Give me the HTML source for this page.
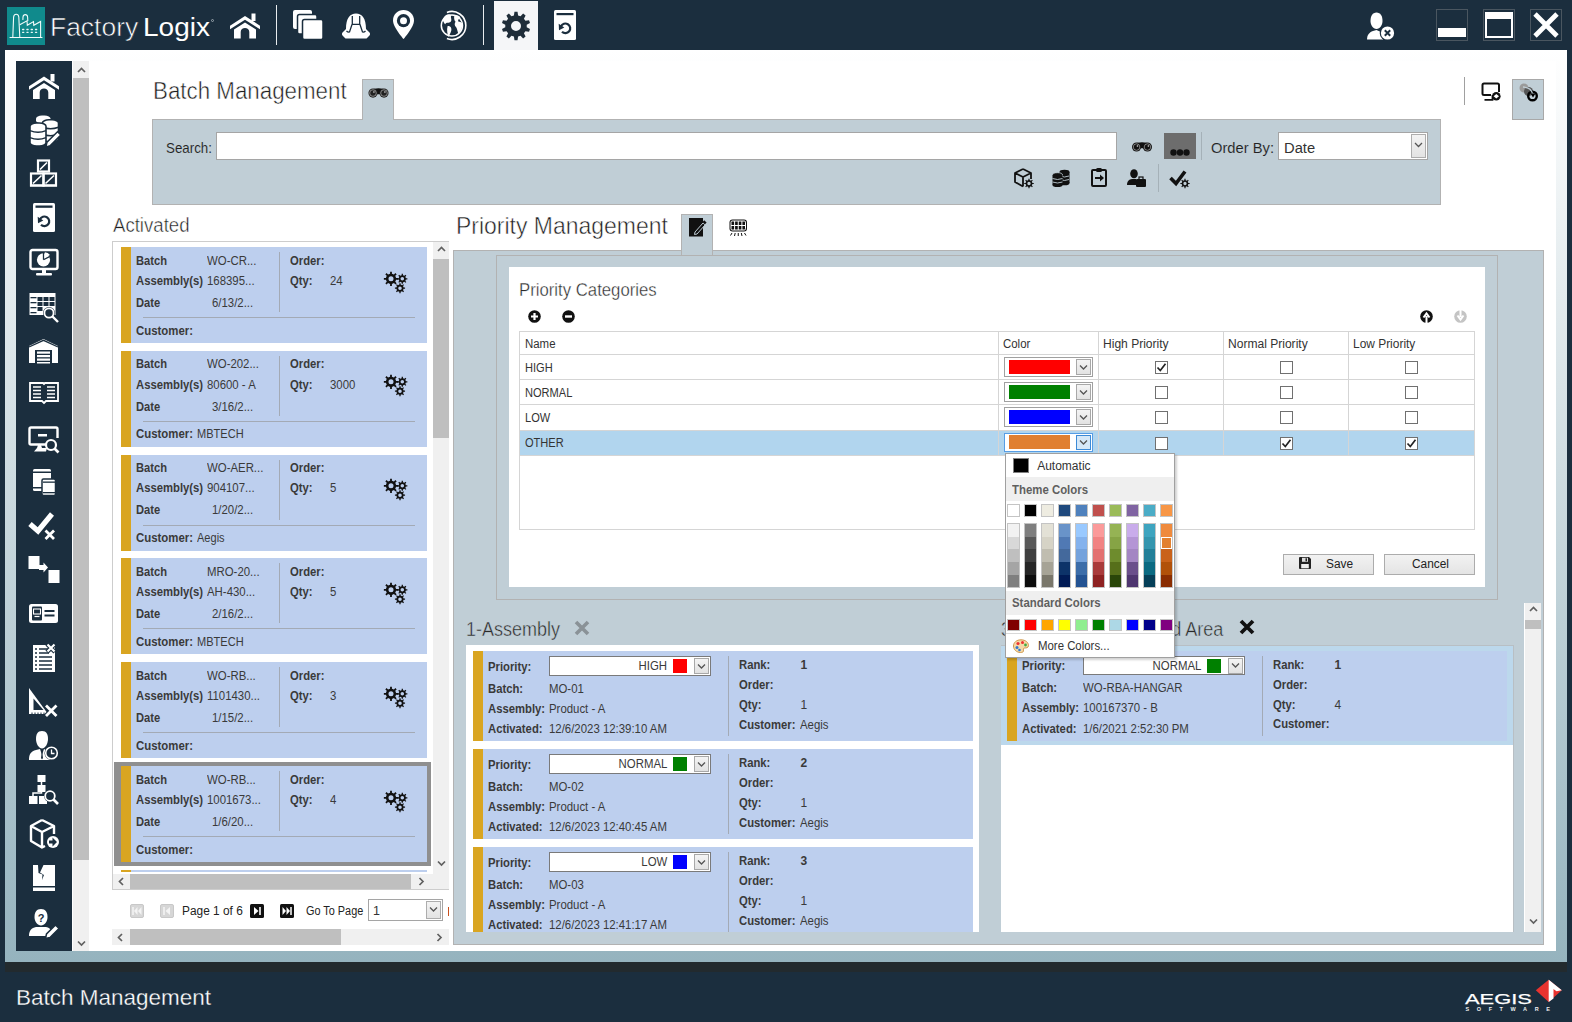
<!DOCTYPE html>
<html><head><meta charset="utf-8">
<style>
*{box-sizing:border-box}
html,body{margin:0;padding:0}
body{width:1572px;height:1022px;position:relative;overflow:hidden;background:#1b2e3e;font-family:"Liberation Sans",sans-serif;color:#333}
.a{position:absolute}
.t{position:absolute;white-space:nowrap;line-height:1}
svg{position:absolute;overflow:visible}
</style></head><body>
<div class="a" style="left:5px;top:50px;width:1562px;height:912px;background:linear-gradient(#ffffff,#95b3be)"></div>
<div class="a" style="left:16px;top:61px;width:1540px;height:890px;background:#fff"></div>
<div class="a" style="left:5px;top:962px;width:1562px;height:10px;background:#222a2e"></div>
<div class="a" style="left:7px;top:7px;width:38px;height:38px;background:#108a8c"></div>
<svg style="left:7px;top:7px;" width="38" height="38" viewBox="0 0 38 38"><g fill="none" stroke="#f2fbfb" stroke-width="1.1" stroke-linecap="round">
<path d="M3,30.5 H35"/>
<path d="M5.8,30.5 L6.6,10 Q7,7.3 9.2,7.3 Q11.4,7.3 11.8,10 L12.8,30.5"/>
<path d="M15.9,12.5 L16,10 Q16.3,7.6 18.3,7.6 Q20.3,7.6 20.6,10 L20.8,13.5"/>
<path d="M13.2,17.6 L20,13.8 L20.3,18.3 L26.5,14.6 L26.8,18.3 L33.6,14.4 V30.5"/>
</g><g stroke="#e8f6f6" stroke-width="1.3" stroke-linecap="round">
<path d="M15.6,22.5 h1.2 M19.9,22.5 h1.2 M24.2,22.5 h1.2 M28.5,22.5 h1.2 M15.6,25.3 h1.2 M19.9,25.3 h1.2 M24.2,25.3 h1.2 M28.5,25.3 h1.2"/></g></svg>
<div class="t" style="left:50.4px;top:15.46px;font-size:25.8px;font-weight:400;color:#ffffff;transform:scaleX(1.025);transform-origin:left top;-webkit-text-stroke:0.6px #1b2e3e;">Factory</div>
<div class="t" style="left:143.4px;top:15.46px;font-size:25.8px;font-weight:400;color:#ffffff;transform:scaleX(1.085);transform-origin:left top;">Logix</div>
<div class="a" style="left:210.5px;top:18.5px;width:3.2px;height:3.2px;border-radius:50%;border:0.8px solid #9aa5ad"></div>
<svg style="left:230px;top:13px;" width="30" height="26" viewBox="0 0 30 25"><path d="M0,12.2 L15,2.5 L30,12.2 L30,15.8 L15,6.2 L0,15.8 Z" fill="#ffffff"/>
<rect x="21.5" y="0" width="4" height="7.5" fill="#ffffff"/>
<path d="M4,16 L15,9 L26,16 L26,25 L19.3,25 L19.3,18.5 C19.3,16 17.3,14.5 15,14.5 C12.7,14.5 10.7,16 10.7,18.5 L10.7,25 L4,25 Z" fill="#ffffff"/></svg>
<div class="a" style="left:276px;top:5px;width:1px;height:40px;background:#e8ecee"></div>
<div class="a" style="left:483px;top:5px;width:1px;height:40px;background:#e8ecee"></div>
<svg style="left:293px;top:10px;" width="31" height="30" viewBox="0 0 31 30"><rect x="0" y="0" width="19" height="19" rx="2" fill="#ffffff"/>
<rect x="4.5" y="4.5" width="19.5" height="19.5" rx="2" fill="#ffffff" stroke="#1b2e3e" stroke-width="1.5"/>
<rect x="9.5" y="9.5" width="20.5" height="20" rx="2" fill="#ffffff" stroke="#1b2e3e" stroke-width="1.5"/></svg>
<svg style="left:341px;top:13px;" width="30" height="26" viewBox="0 0 30 26"><path d="M5,16 C5,5 9,0.5 15,0.5 C21,0.5 25,5 25,16 L27.5,18.5 Q30,20.5 28.5,22.5 L25.5,25.5 L4.5,25.5 L1.5,22.5 Q0,20.5 2.5,18.5 Z" fill="#ffffff"/>
<path d="M11.3,3 V11.3 H18.7 V3" fill="none" stroke="#1b2e3e" stroke-width="1.3"/>
<path d="M11,11.5 L8.5,19 Q7,19.5 5.5,18 M19,11.5 L21.5,19 Q23,19.5 24.5,18" fill="none" stroke="#1b2e3e" stroke-width="1.3"/></svg>
<svg style="left:393px;top:10px;" width="21" height="29" viewBox="0 0 21 29"><path d="M10.5,0 C16.3,0 21,4.6 21,10.4 C21,17 10.5,29 10.5,29 C10.5,29 0,17 0,10.4 C0,4.6 4.7,0 10.5,0 Z" fill="#ffffff"/>
<circle cx="10.5" cy="10.7" r="6.6" fill="#1b2e3e"/><circle cx="10.5" cy="10.7" r="3.5" fill="#ffffff"/></svg>
<svg style="left:440px;top:10px;" width="27" height="31" viewBox="0 0 27 31"><circle cx="11.9" cy="15.5" r="10.6" fill="#1b2e3e" stroke="#ffffff" stroke-width="1.5"/>
<path d="M4.5,9 C6,6 9,5 11,6.5 C10,8.5 12,10 10.5,12 C9,13.5 7,12 6,14 C5,12.5 3.5,11 4.5,9 Z M8,15.5 C10,15 11.5,17 11,19 C10.5,21 9.5,23 8.5,24.5 C8,22 7,19 8,15.5 Z M13.5,7 C15.5,6 18,7 18.5,8.5 C17,9.5 16,11 17,12 C19,12 20.5,13 20,15.5 C19.5,18 18,20 17,22 C16,20 16,18 15,16.5 C13.5,15.5 13.5,13 14.5,12 C13.5,11 13,9 13.5,7 Z" fill="#ffffff" transform="translate(11.9,15.5) scale(1.22) translate(-11.5,-15)"/>
<path d="M6.9,2.4 A14,14 0 1 1 6.9,28.6" fill="none" stroke="#ffffff" stroke-width="1.6"/></svg>
<div class="a" style="left:494px;top:1px;width:44px;height:49px;background:#f5f6f8"></div>
<svg style="left:501px;top:11px;" width="30" height="30" viewBox="0 0 30 30"><path d="M17.09,25.60 L16.53,29.22 L13.47,29.22 L12.91,25.60 L10.46,24.80 L7.88,27.40 L5.41,25.60 L7.08,22.34 L5.57,20.26 L1.95,20.85 L1.01,17.94 L4.28,16.29 L4.28,13.71 L1.01,12.06 L1.95,9.15 L5.57,9.74 L7.08,7.66 L5.41,4.40 L7.88,2.60 L10.46,5.20 L12.91,4.40 L13.47,0.78 L16.53,0.78 L17.09,4.40 L19.54,5.20 L22.12,2.60 L24.59,4.40 L22.92,7.66 L24.43,9.74 L28.05,9.15 L28.99,12.06 L25.72,13.71 L25.72,16.29 L28.99,17.94 L28.05,20.85 L24.43,20.26 L22.92,22.34 L24.59,25.60 L22.12,27.40 L19.54,24.80 Z M20.0,15 A5.0,5.0 0 1 0 10.0,15 A5.0,5.0 0 1 0 20.0,15 Z" fill="#1f2d39" fill-rule="evenodd"/></svg>
<svg style="left:554px;top:10px;" width="22" height="30" viewBox="0 0 22 30"><rect x="0" y="0" width="22" height="30" rx="1.5" fill="#ffffff"/>
<rect x="2.5" y="3" width="17" height="2.2" fill="#1b2e3e"/>
<path d="M8,21.7 A4.8,4.8 0 1 0 7,16.4" fill="none" stroke="#1b2e3e" stroke-width="2.2"/>
<path d="M4.7,13.8 L10.3,17.4 L5,20.2 Z" fill="#1b2e3e"/></svg>
<svg style="left:1367px;top:12px;" width="28" height="29" viewBox="0 0 28 29"><path d="M7.5,0.5 C11.5,0.5 13.5,4 13.5,9 C13.5,13 11,17 7.5,17 C4,17 1.5,13 1.5,9 C1.5,4 3.5,0.5 7.5,0.5 Z" fill="#ffffff" transform="translate(2,0)"/>
<path d="M0,27.5 C0,23 2,20.5 6,19 L9.5,18 L16,21 L16,27.5 Z" fill="#ffffff"/>
<circle cx="20.5" cy="21" r="7.8" fill="#1b2e3e"/><circle cx="20.5" cy="21" r="6.6" fill="#ffffff"/>
<path d="M17.8,18.3 L23.2,23.7 M23.2,18.3 L17.8,23.7" stroke="#1b2e3e" stroke-width="2"/></svg>
<div class="a" style="left:1436px;top:9px;width:32px;height:32px;border:1px solid #4a5660"></div>
<div class="a" style="left:1483px;top:9px;width:32px;height:32px;border:1px solid #4a5660"></div>
<div class="a" style="left:1530px;top:9px;width:32px;height:32px;border:1px solid #4a5660"></div>
<div class="a" style="left:1438px;top:28px;width:28px;height:9px;background:#fff"></div>
<div class="a" style="left:1485px;top:12px;width:28px;height:26px;border:2px solid #fff;border-top-width:7px"></div>
<svg style="left:1533px;top:12px;" width="26" height="26" viewBox="0 0 26 26"><path d="M2,2 L24,24 M24,2 L2,24" stroke="#ffffff" stroke-width="4.8"/></svg>
<div class="a" style="left:16px;top:61px;width:56px;height:890px;background:#1b2e3e"></div>
<div class="a" style="left:73px;top:61px;width:16px;height:890px;background:#f0f0f0"></div>
<div class="a" style="left:73px;top:78px;width:16px;height:782px;background:#bfbfbf"></div>
<svg style="left:76.5px;top:66.5px;" width="9" height="9" viewBox="0 0 9 9"><path d="M1,5 L4.5,1.5 L8,5" fill="none" stroke="#606060" stroke-width="1.7"/></svg>
<svg style="left:76.5px;top:940px;" width="9" height="9" viewBox="0 0 9 9"><path d="M1,1.5 L4.5,5 L8,1.5" fill="none" stroke="#606060" stroke-width="1.7"/></svg>
<svg style="left:29px;top:73.5px;" width="30" height="25" viewBox="0 0 30 25"><path d="M0,12.2 L15,2.5 L30,12.2 L30,15.8 L15,6.2 L0,15.8 Z" fill="#ffffff"/>
<rect x="21.5" y="0" width="4" height="7.5" fill="#ffffff"/>
<path d="M4,16 L15,9 L26,16 L26,25 L19.3,25 L19.3,18.5 C19.3,16 17.3,14.5 15,14.5 C12.7,14.5 10.7,16 10.7,18.5 L10.7,25 L4,25 Z" fill="#ffffff"/></svg>
<svg style="left:28px;top:114.6px;" width="32" height="32" viewBox="0 0 32 32"><rect x="8" y="0.5" width="14.5" height="8" rx="6" ry="3" fill="#ffffff"/>
<rect x="14.5" y="4.8" width="16" height="22" rx="6.5" ry="3" fill="#ffffff" stroke="#1b2e3e" stroke-width="1.6"/>
<path d="M14.5,12.2 Q22.5,15.2 30.5,12.2 M14.5,19.2 Q22.5,22.2 30.5,19.2" stroke="#1b2e3e" stroke-width="1.5" fill="none"/>
<rect x="2" y="8" width="16" height="23" rx="6.5" ry="3.2" fill="#ffffff" stroke="#1b2e3e" stroke-width="1.6"/>
<path d="M2,15.6 Q10,18.8 18,15.6 M2,22.6 Q10,25.8 18,22.6" stroke="#1b2e3e" stroke-width="1.5" fill="none"/>
<path d="M18,31.8 L19,27.2 L29.5,16.8 L32.8,20 L22.3,30.6 Z" fill="#ffffff" stroke="#1b2e3e" stroke-width="1.4"/></svg>
<svg style="left:28px;top:158.4px;" width="32" height="30" viewBox="0 0 32 30"><g fill="none" stroke="#ffffff" stroke-width="2.2"><rect x="10" y="2.5" width="11" height="11"/><rect x="3" y="15.5" width="12.5" height="12"/><rect x="15.5" y="15.5" width="12.5" height="12"/>
</g><path d="M12,11.5 L19,4.5 M5,25.5 L13.5,17.5 M17.5,25.5 L26,17.5" stroke="#ffffff" stroke-width="1.6"/><rect x="2" y="26.5" width="27" height="2" fill="#ffffff"/></svg>
<svg style="left:28px;top:201.8px;" width="32" height="32" viewBox="0 0 32 32"><rect x="5" y="1" width="22" height="29" rx="1.5" fill="#ffffff"/><rect x="7.5" y="3.5" width="17" height="2.3" fill="#1b2e3e"/>
<path d="M13,22.7 A4.8,4.8 0 1 0 12,17.4" fill="none" stroke="#1b2e3e" stroke-width="2.2"/><path d="M9.7,14.8 L15.3,18.4 L10,21.2 Z" fill="#1b2e3e"/></svg>
<svg style="left:28px;top:247.5px;" width="32" height="29" viewBox="0 0 32 29"><rect x="2.5" y="2" width="27" height="19" rx="2" fill="none" stroke="#ffffff" stroke-width="2.4"/>
<circle cx="15.5" cy="11.8" r="6.6" fill="#ffffff"/><path d="M15.5,11.8 L15.5,5 M15.5,11.8 L21.5,8.6" stroke="#1b2e3e" stroke-width="1.3"/><path d="M16.8,9.8 L16.8,4.2 A6.6,6.6 0 0 1 22,7.1 Z" fill="#ffffff"/>
<rect x="14" y="21" width="4" height="4" fill="#ffffff"/><rect x="8" y="25" width="16" height="2.6" rx="1" fill="#ffffff"/></svg>
<svg style="left:28px;top:292.3px;" width="32" height="31" viewBox="0 0 32 31"><rect x="1.5" y="1" width="26" height="22" fill="#ffffff"/>
<g fill="#1b2e3e"><rect x="9.5" y="5" width="5" height="4"/><rect x="15.5" y="5" width="5" height="4"/><rect x="21.5" y="5" width="5" height="4"/><rect x="9.5" y="10" width="5" height="4"/><rect x="15.5" y="10" width="5" height="4"/><rect x="21.5" y="10" width="5" height="4"/><rect x="9.5" y="15" width="5" height="4"/><rect x="2.5" y="5" width="6" height="1.3"/><rect x="2.5" y="10" width="6" height="1.3"/><rect x="2.5" y="15" width="6" height="1.3"/><rect x="2.5" y="20" width="6" height="1.3"/></g>
<circle cx="21" cy="21" r="6" fill="#1b2e3e"/><circle cx="21" cy="21" r="4.6" fill="none" stroke="#ffffff" stroke-width="1.8"/><path d="M24.5,24.5 L30,30" stroke="#ffffff" stroke-width="2.4"/></svg>
<svg style="left:28px;top:336.5px;" width="32" height="27" viewBox="0 0 32 27"><path d="M1,9 L15.5,2 L30,9 L30,26 L24,26 L24,13 L7,13 L7,26 L1,26 Z" fill="#ffffff"/>
<path d="M1,10 L15.5,3.3 L30,10" fill="none" stroke="#1b2e3e" stroke-width="1.3"/>
<g fill="#ffffff"><rect x="9" y="14.5" width="13" height="2.2"/><rect x="9" y="18" width="13" height="2.2"/><rect x="9" y="21.5" width="13" height="2.2"/><rect x="9" y="25" width="13" height="1.5"/></g></svg>
<svg style="left:28px;top:381.8px;" width="32" height="22" viewBox="0 0 32 22"><path d="M2,1 L15,1 L16,2 L17,1 L30,1 L30,19 L18,19 L16,21 L14,19 L2,19 Z" fill="none" stroke="#ffffff" stroke-width="1.8"/>
<g stroke="#ffffff" stroke-width="1.5"><path d="M5,5 H13 M5,8.5 H13 M5,12 H13 M5,15.5 H13 M19,5 H27 M19,8.5 H27 M19,12 H27 M19,15.5 H27"/></g></svg>
<svg style="left:28px;top:425.7px;" width="32" height="28" viewBox="0 0 32 28"><path d="M19,18.5 L3,18.5 Q1.5,18.5 1.5,17 L1.5,3 Q1.5,1.5 3,1.5 L28,1.5 Q29.5,1.5 29.5,3 L29.5,12" fill="none" stroke="#ffffff" stroke-width="2.4"/>
<rect x="10" y="8" width="9" height="2.5" fill="#ffffff"/><path d="M6,25.5 L18,25.5 L19,22 L14,22 L13,19 L10,19 L9,22 Z" fill="#ffffff"/>
<circle cx="23" cy="19" r="5" fill="none" stroke="#ffffff" stroke-width="2.2"/><path d="M26.5,22.5 L30.5,26.5" stroke="#ffffff" stroke-width="2.6"/></svg>
<svg style="left:28px;top:468.4px;" width="32" height="28" viewBox="0 0 32 28"><rect x="5" y="1" width="18" height="22" rx="1.5" fill="#ffffff"/><rect x="5" y="3.5" width="18" height="1.5" fill="#1b2e3e"/><rect x="5" y="19" width="18" height="1.5" fill="#1b2e3e"/>
<rect x="14" y="11" width="13.5" height="16.5" rx="1.5" fill="#ffffff" stroke="#1b2e3e" stroke-width="1.5"/><rect x="15" y="13.5" width="12" height="1.3" fill="#1b2e3e"/><rect x="15" y="24" width="12" height="1.3" fill="#1b2e3e"/></svg>
<svg style="left:28px;top:510.9px;" width="32" height="29" viewBox="0 0 32 29"><path d="M2,13 L10,20 L24,3" fill="none" stroke="#ffffff" stroke-width="5.2"/><path d="M17.5,19.5 L26,28 M26,19.5 L17.5,28" stroke="#ffffff" stroke-width="2.8"/></svg>
<svg style="left:28px;top:555.3px;" width="32" height="29" viewBox="0 0 32 29"><rect x="0.5" y="1" width="11" height="13" fill="#ffffff"/><rect x="20.5" y="15" width="11" height="13" fill="#ffffff"/>
<path d="M11,10 L15.5,10 L15.5,7.5 L20,12.5 L15.5,17.5 L15.5,15 L11,15 Z" fill="#ffffff"/></svg>
<svg style="left:28px;top:603.3px;" width="32" height="21" viewBox="0 0 32 21"><rect x="1" y="1" width="29" height="19" rx="2.5" fill="#ffffff"/><rect x="4" y="3.5" width="10" height="14" rx="1" fill="#1b2e3e"/>
<rect x="5.5" y="6" width="7" height="5" fill="none" stroke="#ffffff" stroke-width="1.1"/><path d="M6.5,13.5 H11.5" stroke="#ffffff" stroke-width="1.2"/>
<path d="M16.5,8 H26.5 M16.5,12.5 H26.5" stroke="#1b2e3e" stroke-width="1.8"/></svg>
<svg style="left:28px;top:643.0px;" width="32" height="30" viewBox="0 0 32 30"><rect x="5" y="2" width="22" height="27" fill="#ffffff"/>
<g stroke="#1b2e3e" stroke-width="1.4"><path d="M7,6 H9 M11,6 H21 M7,10 H9 M11,10 H21 M7,14 H9 M11,14 H24 M7,18 H9 M11,18 H24 M7,22 H9 M11,22 H24 M7,26 H9 M11,26 H24"/></g>
<path d="M19,1 L27,9 M27,1 L19,9" stroke="#1b2e3e" stroke-width="4.5"/><path d="M19.5,1.5 L26.5,8.5 M26.5,1.5 L19.5,8.5" stroke="#ffffff" stroke-width="2.2"/></svg>
<svg style="left:28px;top:686.8px;" width="32" height="31" viewBox="0 0 32 31"><path d="M1,1 L1,27 L20,27 Z" fill="#ffffff"/><path d="M5.5,11.5 L5.5,23 L15.5,23 Z" fill="#1b2e3e"/>
<g stroke="#1b2e3e" stroke-width="1"><path d="M4,27 V25.5 M7,27 V25.5 M10,27 V25.5 M13,27 V25.5 M16,27 V25.5"/></g>
<path d="M17.5,18 L29,29.5 M29,18 L17.5,29.5" stroke="#1b2e3e" stroke-width="5"/><path d="M18,18.5 L28.5,29 M28.5,18.5 L18,29" stroke="#ffffff" stroke-width="2.8"/></svg>
<svg style="left:28px;top:730.3px;" width="32" height="31" viewBox="0 0 32 31"><path d="M14,1 C18.5,1 20,4.5 20,9 C20,14 17,18.5 14,18.5 C11,18.5 8,14 8,9 C8,4.5 9.5,1 14,1 Z" fill="#ffffff"/>
<path d="M1,30 C1,24 3,21.5 8,20 L12,19 L14,25 L16,19 L20,21 L22,30 Z" fill="#ffffff"/><path d="M14,20 L13,28 L14,29.5 L15,28 Z" fill="#1b2e3e"/>
<circle cx="23.5" cy="23" r="7" fill="#1b2e3e"/><circle cx="23.5" cy="23" r="5.8" fill="none" stroke="#ffffff" stroke-width="1.6"/><path d="M23.5,19.5 V23.5 H26.5" fill="none" stroke="#ffffff" stroke-width="1.3"/></svg>
<svg style="left:28px;top:774.0px;" width="32" height="32" viewBox="0 0 32 32"><rect x="9.5" y="1" width="8" height="7" fill="#ffffff"/><rect x="9.5" y="11" width="8" height="7" fill="#ffffff"/><path d="M13.5,8 V11" stroke="#ffffff" stroke-width="1.5"/>
<path d="M5,22 V19 H13.5 V18" fill="none" stroke="#ffffff" stroke-width="1.5"/><rect x="1" y="22" width="8.5" height="8" fill="#ffffff"/><rect x="11" y="22" width="8" height="8" fill="#ffffff"/>
<circle cx="22" cy="22" r="6" fill="#1b2e3e"/><circle cx="22" cy="22" r="4.8" fill="none" stroke="#ffffff" stroke-width="1.8"/><path d="M25.5,25.5 L30,30" stroke="#ffffff" stroke-width="2.6"/></svg>
<svg style="left:29px;top:818.0px;" width="32" height="32" viewBox="0 0 32 32"><path d="M13,2 L25,8 L25,16 M13,2 L2,8 L2,23 L13,29.5 L16,28 M2,8 L13,14 L25,8 M13,14 L13,29.5" fill="none" stroke="#ffffff" stroke-width="2.4" stroke-linejoin="round"/>
<circle cx="24" cy="24" r="7.5" fill="#1b2e3e"/><circle cx="24" cy="24" r="6" fill="#ffffff"/><path d="M20,22.5 H23.5 V19.5 L28,24 L23.5,28.5 V25.5 H20 Z" fill="#1b2e3e"/></svg>
<svg style="left:28px;top:863.7px;" width="32" height="28" viewBox="0 0 32 28"><rect x="5" y="1" width="22" height="26" fill="#ffffff"/><path d="M10,1 L15.5,1 L12,8.5 L16,11 L14,16 L14.5,10.5 L10.5,9 Z" fill="#1b2e3e"/>
<rect x="5" y="22" width="22" height="1.5" fill="#1b2e3e"/></svg>
<svg style="left:28px;top:907.5px;" width="32" height="32" viewBox="0 0 32 32"><path d="M13,1 C17.5,1 19.5,4.5 19.5,9 C19.5,13.5 16.5,17.5 13,17.5 C9.5,17.5 6.5,13.5 6.5,9 C6.5,4.5 8.5,1 13,1 Z" fill="#ffffff"/>
<text x="13" y="13.5" font-family="Liberation Sans" font-weight="700" font-size="11" fill="#1b2e3e" text-anchor="middle">?</text>
<path d="M1,28 C1,22.5 3.5,20 8,19 L18,19 C21,19.5 22,21 23,22 L19,28 Z" fill="#ffffff"/>
<path d="M17.5,30.5 L18.5,26 L27.5,17 L31,20.5 L22,29.5 Z" fill="#ffffff" stroke="#1b2e3e" stroke-width="1.5"/></svg>
<div class="t" style="left:16px;top:986.95px;font-size:22.5px;font-weight:400;color:#ffffff;-webkit-text-stroke:0.3px #1b2e3e;">Batch Management</div>
<div class="t" style="left:1465px;top:990.88px;font-size:15.5px;font-weight:400;color:#ffffff;transform:scaleX(1.41);transform-origin:left top;-webkit-text-stroke:0.25px #fff;">AEGIS</div>
<div class="t" style="left:1465.5px;top:1006.84px;font-size:5.5px;font-weight:700;color:#f0f0f0;letter-spacing:7.6px;">SOFTWARE</div>
<svg style="left:1535px;top:979px;" width="28" height="24" viewBox="0 0 28 24"><path d="M0.8,11.2 L13.7,0.8 L26.8,11.2 L13.7,22.9 Z" fill="#e8332f"/><path d="M13.7,0.8 L26.8,11.2 L21.5,12.3 L18.5,10 L18.5,19.5 L13.7,22.9 Z" fill="#ffffff"/></svg>
<div class="t" style="left:153px;top:80.10px;font-size:23.5px;font-weight:400;color:#1e1e1e;transform:scaleX(0.95);transform-origin:left top;-webkit-text-stroke:0.5px #ffffff;">Batch Management</div>
<div class="a" style="left:362px;top:79px;width:32px;height:42px;background:#c0ced6;border:1px solid #b2b2b2;border-bottom:none"></div>
<svg style="left:367.5px;top:86.5px;" width="21" height="11" viewBox="0 0 22 12"><path d="M3,4 C5,0.5 17,0.5 19,4 L19,8 L3,8 Z" fill="#111"/><circle cx="5" cy="6.6" r="5" fill="#222"/><circle cx="17" cy="6.6" r="5" fill="#222"/><circle cx="5" cy="6.6" r="3.6" fill="none" stroke="#bbb" stroke-width="0.7"/><circle cx="17" cy="6.6" r="3.6" fill="none" stroke="#bbb" stroke-width="0.7"/><circle cx="6" cy="5.4" r="0.9" fill="#ddd"/><circle cx="18" cy="5.4" r="0.9" fill="#ddd"/></svg>
<div class="a" style="left:152px;top:119px;width:1289px;height:86px;background:#c0ced6;border:1px solid #b2b2b2"></div>
<div class="a" style="left:363px;top:119px;width:30px;height:2px;background:#c0ced6"></div>
<div class="t" style="left:165.8px;top:139.88px;font-size:15.5px;font-weight:400;color:#222;transform:scaleX(0.86);transform-origin:left top;-webkit-text-stroke:0.12px #c0ced6;">Search:</div>
<div class="a" style="left:216px;top:132px;width:901px;height:28px;background:#fff;border:1px solid #a5a5a5"></div>
<svg style="left:1132px;top:140.5px;" width="20" height="11" viewBox="0 0 22 12"><path d="M3,4 C5,0.5 17,0.5 19,4 L19,8 L3,8 Z" fill="#111"/><circle cx="5" cy="6.6" r="5" fill="#111"/><circle cx="17" cy="6.6" r="5" fill="#111"/><circle cx="5" cy="6.6" r="3.6" fill="none" stroke="#bbb" stroke-width="0.7"/><circle cx="17" cy="6.6" r="3.6" fill="none" stroke="#bbb" stroke-width="0.7"/><circle cx="6" cy="5.4" r="0.9" fill="#ddd"/><circle cx="18" cy="5.4" r="0.9" fill="#ddd"/></svg>
<div class="a" style="left:1164px;top:133px;width:32px;height:26px;background:#6d6d6d"></div>
<svg style="left:1164px;top:133px;" width="32" height="26" viewBox="0 0 32 26"><circle cx="9.5" cy="19.5" r="3.2" fill="#111"/><circle cx="16" cy="19.5" r="3.2" fill="#111"/><circle cx="22.5" cy="19.5" r="3.2" fill="#111"/></svg>
<div class="a" style="left:1201px;top:132px;width:1px;height:28px;background:#a5b1b8"></div>
<div class="t" style="left:1211px;top:140.38px;font-size:15.5px;font-weight:400;color:#222;transform:scaleX(0.95);transform-origin:left top;-webkit-text-stroke:0.12px #c0ced6;">Order By:</div>
<div class="a" style="left:1278px;top:132px;width:150px;height:28px;background:#fff;border:1px solid #a5a5a5"></div>
<div class="a" style="left:1411px;top:134px;width:15px;height:24px;background:linear-gradient(#f3f3f3,#e3e3e3);border:1px solid #adadad"></div>
<svg style="left:1414px;top:141px;" width="9" height="8" viewBox="0 0 9 8"><path d="M1,2 L4.5,5.5 L8,2" fill="none" stroke="#555" stroke-width="1.3"/></svg>
<div class="t" style="left:1284px;top:139.88px;font-size:15.5px;font-weight:400;color:#333;transform:scaleX(0.95);transform-origin:left top;">Date</div>
<svg style="left:1014px;top:168px;" width="20" height="20" viewBox="0 0 20 20"><path d="M9,1 L17,5 L17,11 M9,1 L1,5 L1,14 L9,18.5 M1,5 L9,9 L17,5 M9,9 L9,18.5" fill="none" stroke="#111" stroke-width="1.8" stroke-linejoin="round"/><path d="M18.40,14.89 L19.76,14.91 L19.76,16.09 L18.40,16.11 L17.84,17.48 L18.79,18.45 L17.95,19.29 L16.98,18.34 L15.61,18.90 L15.59,20.26 L14.41,20.26 L14.39,18.90 L13.02,18.34 L12.05,19.29 L11.21,18.45 L12.16,17.48 L11.60,16.11 L10.24,16.09 L10.24,14.91 L11.60,14.89 L12.16,13.52 L11.21,12.55 L12.05,11.71 L13.02,12.66 L14.39,12.10 L14.41,10.74 L15.59,10.74 L15.61,12.10 L16.98,12.66 L17.95,11.71 L18.79,12.55 L17.84,13.52 Z M16.68,15.5 A1.68,1.68 0 1 0 13.32,15.5 A1.68,1.68 0 1 0 16.68,15.5 Z" fill="#111" fill-rule="evenodd"/></svg>
<svg style="left:1052px;top:169px;" width="18" height="18" viewBox="0 0 18 18"><ellipse cx="12.5" cy="3" rx="5" ry="2.3" fill="#111"/><rect x="7.5" y="3" width="10" height="11" fill="#111"/><ellipse cx="12.5" cy="14" rx="5" ry="2.3" fill="#111"/><path d="M8,7 Q12.5,9 17,7 M8,10.5 Q12.5,12.5 17,10.5" stroke="#c0ced6" stroke-width="0.9" fill="none"/><ellipse cx="5.5" cy="6" rx="5" ry="2.3" fill="#111" stroke="#c0ced6" stroke-width="0.8"/><rect x="0.5" y="6" width="10" height="10" fill="#111"/><ellipse cx="5.5" cy="16" rx="5" ry="2.1" fill="#111"/><path d="M0.5,9.5 Q5.5,11.5 10.5,9.5 M0.5,13 Q5.5,15 10.5,13" stroke="#c0ced6" stroke-width="0.9" fill="none"/></svg>
<svg style="left:1091px;top:167px;" width="16" height="20" viewBox="0 0 16 20"><rect x="1" y="3" width="14" height="16" rx="1" fill="none" stroke="#111" stroke-width="2"/><rect x="5" y="1" width="6" height="4" rx="1.5" fill="#111"/><path d="M4,11 H10" stroke="#111" stroke-width="2"/><path d="M9,7.5 L13,11 L9,14.5 Z" fill="#111"/></svg>
<svg style="left:1127px;top:169px;" width="19" height="18" viewBox="0 0 19 18"><ellipse cx="7" cy="4.8" rx="3.8" ry="4.5" fill="#111"/><path d="M0,16 C0,12 2,10.5 5,10 L9,10 L10,16 Z" fill="#111"/><rect x="9" y="10" width="10" height="8" rx="1" fill="#111"/><rect x="12" y="8" width="4" height="3" fill="none" stroke="#111" stroke-width="1.2"/></svg>
<div class="a" style="left:1158px;top:164px;width:1px;height:28px;background:#a5b1b8"></div>
<svg style="left:1170px;top:170px;" width="20" height="18" viewBox="0 0 20 18"><path d="M0.5,8 L6,13.5 L15,1.5" fill="none" stroke="#111" stroke-width="3.6"/><path d="M18.33,12.91 L19.66,12.92 L19.66,14.08 L18.33,14.09 L17.78,15.43 L18.71,16.39 L17.89,17.21 L16.93,16.28 L15.59,16.83 L15.58,18.16 L14.42,18.16 L14.41,16.83 L13.07,16.28 L12.11,17.21 L11.29,16.39 L12.22,15.43 L11.67,14.09 L10.34,14.08 L10.34,12.92 L11.67,12.91 L12.22,11.57 L11.29,10.61 L12.11,9.79 L13.07,10.72 L14.41,10.17 L14.42,8.84 L15.58,8.84 L15.59,10.17 L16.93,10.72 L17.89,9.79 L18.71,10.61 L17.78,11.57 Z M16.645,13.5 A1.645,1.645 0 1 0 13.355,13.5 A1.645,1.645 0 1 0 16.645,13.5 Z" fill="#111" fill-rule="evenodd"/></svg>
<div class="a" style="left:1464px;top:77px;width:1px;height:28px;background:#a0a0a0"></div>
<svg style="left:1481px;top:82px;" width="21" height="19" viewBox="0 0 21 19"><path d="M10,13 L3,13 Q1.5,13 1.5,11.5 L1.5,3 Q1.5,1.5 3,1.5 L16.5,1.5 Q18,1.5 18,3 L18,10" fill="none" stroke="#111" stroke-width="2"/><path d="M3.5,17.8 L11.5,17.8 L11.5,13" fill="none" stroke="#111" stroke-width="1.8"/><circle cx="15.3" cy="14.3" r="4.3" fill="#111"/><path d="M12.6,14.3 L15.3,12 L18,14.3 L15.3,16.6 Z" fill="#fff"/></svg>
<div class="a" style="left:1512px;top:79px;width:32px;height:41px;background:#c0ced6;border:1px solid #a8a8a8"></div>
<svg style="left:1519px;top:83px;" width="19" height="18" viewBox="0 0 19 18"><circle cx="5" cy="5" r="4.5" fill="#9a9a9a"/><circle cx="9.5" cy="8.5" r="4.5" fill="#555"/><circle cx="13.5" cy="13" r="4.3" fill="none" stroke="#000" stroke-width="2.4"/><path d="M4,4 C9,4 13,7 14,12" fill="none" stroke="#c0ced6" stroke-width="1.3"/><path d="M11.5,10.5 L14,14.5 L16.5,10.5" fill="#000"/></svg>
<div class="t" style="left:113px;top:215.07px;font-size:20px;font-weight:400;color:#1e1e1e;transform:scaleX(0.93);transform-origin:left top;-webkit-text-stroke:0.45px #fff;">Activated</div>
<div class="a" style="left:112px;top:241px;width:337px;height:649px;background:#fff;border:1px solid #cdcdcd"></div>
<div class="a" style="left:113px;top:242px;width:320px;height:630px;overflow:hidden">
<div class="a" style="left:8px;top:5.0px;width:306px;height:96px;background:#bdcfee"></div>
<div class="a" style="left:8px;top:5.0px;width:10px;height:96px;background:#d9a521"></div>
<div class="t" style="left:23px;top:12.64px;font-size:12px;font-weight:700;color:#3a3a3a;transform:scaleX(0.93);transform-origin:left top;">Batch</div>
<div class="t" style="left:23px;top:32.84px;font-size:12px;font-weight:700;color:#3a3a3a;transform:scaleX(0.94);transform-origin:left top;">Assembly(s)</div>
<div class="t" style="left:23px;top:54.84px;font-size:12px;font-weight:700;color:#3a3a3a;transform:scaleX(0.93);transform-origin:left top;">Date</div>
<div class="t" style="left:23px;top:82.64px;font-size:12px;font-weight:700;color:#3a3a3a;transform:scaleX(0.95);transform-origin:left top;">Customer:</div>
<div class="t" style="left:94px;top:12.64px;font-size:12px;font-weight:400;color:#3a3a3a;transform:scaleX(0.95);transform-origin:left top;">WO-CR...</div>
<div class="t" style="left:94px;top:32.84px;font-size:12px;font-weight:400;color:#3a3a3a;transform:scaleX(0.95);transform-origin:left top;">168395...</div>
<div class="t" style="left:98.5px;top:54.84px;font-size:12px;font-weight:400;color:#3a3a3a;transform:scaleX(0.95);transform-origin:left top;">6/13/2...</div>
<div class="a" style="left:166px;top:10.0px;width:1px;height:60px;background:#a3aab5"></div>
<div class="a" style="left:30px;top:75.0px;width:272px;height:1px;background:#a3aab5"></div>
<div class="t" style="left:176.5px;top:12.64px;font-size:12px;font-weight:700;color:#3a3a3a;transform:scaleX(0.94);transform-origin:left top;">Order:</div>
<div class="t" style="left:176.5px;top:32.84px;font-size:12px;font-weight:700;color:#3a3a3a;transform:scaleX(0.94);transform-origin:left top;">Qty:</div>
<div class="t" style="left:216.5px;top:32.84px;font-size:12px;font-weight:400;color:#3a3a3a;transform:scaleX(0.95);transform-origin:left top;">24</div>
<svg style="left:271px;top:29.5px;" width="23" height="22" viewBox="0 0 23 22"><path d="M12.10,5.89 L14.14,5.91 L14.14,7.69 L12.10,7.71 L11.25,9.76 L12.68,11.22 L11.42,12.48 L9.96,11.05 L7.91,11.90 L7.89,13.94 L6.11,13.94 L6.09,11.90 L4.04,11.05 L2.58,12.48 L1.32,11.22 L2.75,9.76 L1.90,7.71 L-0.14,7.69 L-0.14,5.91 L1.90,5.89 L2.75,3.84 L1.32,2.38 L2.58,1.12 L4.04,2.55 L6.09,1.70 L6.11,-0.34 L7.89,-0.34 L7.91,1.70 L9.96,2.55 L11.42,1.12 L12.68,2.38 L11.25,3.84 Z M9.52,6.8 A2.52,2.52 0 1 0 4.48,6.8 A2.52,2.52 0 1 0 9.52,6.8 Z" fill="#111" fill-rule="evenodd"/><path d="M21.91,6.15 L23.36,6.17 L23.36,7.43 L21.91,7.45 L21.31,8.90 L22.32,9.93 L21.43,10.82 L20.40,9.81 L18.95,10.41 L18.93,11.86 L17.67,11.86 L17.65,10.41 L16.20,9.81 L15.17,10.82 L14.28,9.93 L15.29,8.90 L14.69,7.45 L13.24,7.43 L13.24,6.17 L14.69,6.15 L15.29,4.70 L14.28,3.67 L15.17,2.78 L16.20,3.79 L17.65,3.19 L17.67,1.74 L18.93,1.74 L18.95,3.19 L20.40,3.79 L21.43,2.78 L22.32,3.67 L21.31,4.70 Z M20.085,6.8 A1.7849999999999997,1.7849999999999997 0 1 0 16.515,6.8 A1.7849999999999997,1.7849999999999997 0 1 0 20.085,6.8 Z" fill="#111" fill-rule="evenodd"/><path d="M19.61,15.55 L21.06,15.57 L21.06,16.83 L19.61,16.85 L19.01,18.30 L20.02,19.33 L19.13,20.22 L18.10,19.21 L16.65,19.81 L16.63,21.26 L15.37,21.26 L15.35,19.81 L13.90,19.21 L12.87,20.22 L11.98,19.33 L12.99,18.30 L12.39,16.85 L10.94,16.83 L10.94,15.57 L12.39,15.55 L12.99,14.10 L11.98,13.07 L12.87,12.18 L13.90,13.19 L15.35,12.59 L15.37,11.14 L16.63,11.14 L16.65,12.59 L18.10,13.19 L19.13,12.18 L20.02,13.07 L19.01,14.10 Z M17.785,16.2 A1.7849999999999997,1.7849999999999997 0 1 0 14.215,16.2 A1.7849999999999997,1.7849999999999997 0 1 0 17.785,16.2 Z" fill="#111" fill-rule="evenodd"/></svg>
<div class="a" style="left:8px;top:108.80000000000001px;width:306px;height:96px;background:#bdcfee"></div>
<div class="a" style="left:8px;top:108.80000000000001px;width:10px;height:96px;background:#d9a521"></div>
<div class="t" style="left:23px;top:116.44px;font-size:12px;font-weight:700;color:#3a3a3a;transform:scaleX(0.93);transform-origin:left top;">Batch</div>
<div class="t" style="left:23px;top:136.64px;font-size:12px;font-weight:700;color:#3a3a3a;transform:scaleX(0.94);transform-origin:left top;">Assembly(s)</div>
<div class="t" style="left:23px;top:158.64px;font-size:12px;font-weight:700;color:#3a3a3a;transform:scaleX(0.93);transform-origin:left top;">Date</div>
<div class="t" style="left:23px;top:186.44px;font-size:12px;font-weight:700;color:#3a3a3a;transform:scaleX(0.95);transform-origin:left top;">Customer:</div>
<div class="t" style="left:94px;top:116.44px;font-size:12px;font-weight:400;color:#3a3a3a;transform:scaleX(0.95);transform-origin:left top;">WO-202...</div>
<div class="t" style="left:94px;top:136.64px;font-size:12px;font-weight:400;color:#3a3a3a;transform:scaleX(0.95);transform-origin:left top;">80600 - A</div>
<div class="t" style="left:98.5px;top:158.64px;font-size:12px;font-weight:400;color:#3a3a3a;transform:scaleX(0.95);transform-origin:left top;">3/16/2...</div>
<div class="t" style="left:84px;top:186.44px;font-size:12px;font-weight:400;color:#3a3a3a;transform:scaleX(0.92);transform-origin:left top;">MBTECH</div>
<div class="a" style="left:166px;top:113.80000000000001px;width:1px;height:60px;background:#a3aab5"></div>
<div class="a" style="left:30px;top:178.8px;width:272px;height:1px;background:#a3aab5"></div>
<div class="t" style="left:176.5px;top:116.44px;font-size:12px;font-weight:700;color:#3a3a3a;transform:scaleX(0.94);transform-origin:left top;">Order:</div>
<div class="t" style="left:176.5px;top:136.64px;font-size:12px;font-weight:700;color:#3a3a3a;transform:scaleX(0.94);transform-origin:left top;">Qty:</div>
<div class="t" style="left:216.5px;top:136.64px;font-size:12px;font-weight:400;color:#3a3a3a;transform:scaleX(0.95);transform-origin:left top;">3000</div>
<svg style="left:271px;top:133.3px;" width="23" height="22" viewBox="0 0 23 22"><path d="M12.10,5.89 L14.14,5.91 L14.14,7.69 L12.10,7.71 L11.25,9.76 L12.68,11.22 L11.42,12.48 L9.96,11.05 L7.91,11.90 L7.89,13.94 L6.11,13.94 L6.09,11.90 L4.04,11.05 L2.58,12.48 L1.32,11.22 L2.75,9.76 L1.90,7.71 L-0.14,7.69 L-0.14,5.91 L1.90,5.89 L2.75,3.84 L1.32,2.38 L2.58,1.12 L4.04,2.55 L6.09,1.70 L6.11,-0.34 L7.89,-0.34 L7.91,1.70 L9.96,2.55 L11.42,1.12 L12.68,2.38 L11.25,3.84 Z M9.52,6.8 A2.52,2.52 0 1 0 4.48,6.8 A2.52,2.52 0 1 0 9.52,6.8 Z" fill="#111" fill-rule="evenodd"/><path d="M21.91,6.15 L23.36,6.17 L23.36,7.43 L21.91,7.45 L21.31,8.90 L22.32,9.93 L21.43,10.82 L20.40,9.81 L18.95,10.41 L18.93,11.86 L17.67,11.86 L17.65,10.41 L16.20,9.81 L15.17,10.82 L14.28,9.93 L15.29,8.90 L14.69,7.45 L13.24,7.43 L13.24,6.17 L14.69,6.15 L15.29,4.70 L14.28,3.67 L15.17,2.78 L16.20,3.79 L17.65,3.19 L17.67,1.74 L18.93,1.74 L18.95,3.19 L20.40,3.79 L21.43,2.78 L22.32,3.67 L21.31,4.70 Z M20.085,6.8 A1.7849999999999997,1.7849999999999997 0 1 0 16.515,6.8 A1.7849999999999997,1.7849999999999997 0 1 0 20.085,6.8 Z" fill="#111" fill-rule="evenodd"/><path d="M19.61,15.55 L21.06,15.57 L21.06,16.83 L19.61,16.85 L19.01,18.30 L20.02,19.33 L19.13,20.22 L18.10,19.21 L16.65,19.81 L16.63,21.26 L15.37,21.26 L15.35,19.81 L13.90,19.21 L12.87,20.22 L11.98,19.33 L12.99,18.30 L12.39,16.85 L10.94,16.83 L10.94,15.57 L12.39,15.55 L12.99,14.10 L11.98,13.07 L12.87,12.18 L13.90,13.19 L15.35,12.59 L15.37,11.14 L16.63,11.14 L16.65,12.59 L18.10,13.19 L19.13,12.18 L20.02,13.07 L19.01,14.10 Z M17.785,16.2 A1.7849999999999997,1.7849999999999997 0 1 0 14.215,16.2 A1.7849999999999997,1.7849999999999997 0 1 0 17.785,16.2 Z" fill="#111" fill-rule="evenodd"/></svg>
<div class="a" style="left:8px;top:212.60000000000002px;width:306px;height:96px;background:#bdcfee"></div>
<div class="a" style="left:8px;top:212.60000000000002px;width:10px;height:96px;background:#d9a521"></div>
<div class="t" style="left:23px;top:220.24px;font-size:12px;font-weight:700;color:#3a3a3a;transform:scaleX(0.93);transform-origin:left top;">Batch</div>
<div class="t" style="left:23px;top:240.44px;font-size:12px;font-weight:700;color:#3a3a3a;transform:scaleX(0.94);transform-origin:left top;">Assembly(s)</div>
<div class="t" style="left:23px;top:262.44px;font-size:12px;font-weight:700;color:#3a3a3a;transform:scaleX(0.93);transform-origin:left top;">Date</div>
<div class="t" style="left:23px;top:290.24px;font-size:12px;font-weight:700;color:#3a3a3a;transform:scaleX(0.95);transform-origin:left top;">Customer:</div>
<div class="t" style="left:94px;top:220.24px;font-size:12px;font-weight:400;color:#3a3a3a;transform:scaleX(0.95);transform-origin:left top;">WO-AER...</div>
<div class="t" style="left:94px;top:240.44px;font-size:12px;font-weight:400;color:#3a3a3a;transform:scaleX(0.95);transform-origin:left top;">904107...</div>
<div class="t" style="left:98.5px;top:262.44px;font-size:12px;font-weight:400;color:#3a3a3a;transform:scaleX(0.95);transform-origin:left top;">1/20/2...</div>
<div class="t" style="left:84px;top:290.24px;font-size:12px;font-weight:400;color:#3a3a3a;transform:scaleX(0.92);transform-origin:left top;">Aegis</div>
<div class="a" style="left:166px;top:217.60000000000002px;width:1px;height:60px;background:#a3aab5"></div>
<div class="a" style="left:30px;top:282.6px;width:272px;height:1px;background:#a3aab5"></div>
<div class="t" style="left:176.5px;top:220.24px;font-size:12px;font-weight:700;color:#3a3a3a;transform:scaleX(0.94);transform-origin:left top;">Order:</div>
<div class="t" style="left:176.5px;top:240.44px;font-size:12px;font-weight:700;color:#3a3a3a;transform:scaleX(0.94);transform-origin:left top;">Qty:</div>
<div class="t" style="left:216.5px;top:240.44px;font-size:12px;font-weight:400;color:#3a3a3a;transform:scaleX(0.95);transform-origin:left top;">5</div>
<svg style="left:271px;top:237.10000000000002px;" width="23" height="22" viewBox="0 0 23 22"><path d="M12.10,5.89 L14.14,5.91 L14.14,7.69 L12.10,7.71 L11.25,9.76 L12.68,11.22 L11.42,12.48 L9.96,11.05 L7.91,11.90 L7.89,13.94 L6.11,13.94 L6.09,11.90 L4.04,11.05 L2.58,12.48 L1.32,11.22 L2.75,9.76 L1.90,7.71 L-0.14,7.69 L-0.14,5.91 L1.90,5.89 L2.75,3.84 L1.32,2.38 L2.58,1.12 L4.04,2.55 L6.09,1.70 L6.11,-0.34 L7.89,-0.34 L7.91,1.70 L9.96,2.55 L11.42,1.12 L12.68,2.38 L11.25,3.84 Z M9.52,6.8 A2.52,2.52 0 1 0 4.48,6.8 A2.52,2.52 0 1 0 9.52,6.8 Z" fill="#111" fill-rule="evenodd"/><path d="M21.91,6.15 L23.36,6.17 L23.36,7.43 L21.91,7.45 L21.31,8.90 L22.32,9.93 L21.43,10.82 L20.40,9.81 L18.95,10.41 L18.93,11.86 L17.67,11.86 L17.65,10.41 L16.20,9.81 L15.17,10.82 L14.28,9.93 L15.29,8.90 L14.69,7.45 L13.24,7.43 L13.24,6.17 L14.69,6.15 L15.29,4.70 L14.28,3.67 L15.17,2.78 L16.20,3.79 L17.65,3.19 L17.67,1.74 L18.93,1.74 L18.95,3.19 L20.40,3.79 L21.43,2.78 L22.32,3.67 L21.31,4.70 Z M20.085,6.8 A1.7849999999999997,1.7849999999999997 0 1 0 16.515,6.8 A1.7849999999999997,1.7849999999999997 0 1 0 20.085,6.8 Z" fill="#111" fill-rule="evenodd"/><path d="M19.61,15.55 L21.06,15.57 L21.06,16.83 L19.61,16.85 L19.01,18.30 L20.02,19.33 L19.13,20.22 L18.10,19.21 L16.65,19.81 L16.63,21.26 L15.37,21.26 L15.35,19.81 L13.90,19.21 L12.87,20.22 L11.98,19.33 L12.99,18.30 L12.39,16.85 L10.94,16.83 L10.94,15.57 L12.39,15.55 L12.99,14.10 L11.98,13.07 L12.87,12.18 L13.90,13.19 L15.35,12.59 L15.37,11.14 L16.63,11.14 L16.65,12.59 L18.10,13.19 L19.13,12.18 L20.02,13.07 L19.01,14.10 Z M17.785,16.2 A1.7849999999999997,1.7849999999999997 0 1 0 14.215,16.2 A1.7849999999999997,1.7849999999999997 0 1 0 17.785,16.2 Z" fill="#111" fill-rule="evenodd"/></svg>
<div class="a" style="left:8px;top:316.4px;width:306px;height:96px;background:#bdcfee"></div>
<div class="a" style="left:8px;top:316.4px;width:10px;height:96px;background:#d9a521"></div>
<div class="t" style="left:23px;top:324.04px;font-size:12px;font-weight:700;color:#3a3a3a;transform:scaleX(0.93);transform-origin:left top;">Batch</div>
<div class="t" style="left:23px;top:344.24px;font-size:12px;font-weight:700;color:#3a3a3a;transform:scaleX(0.94);transform-origin:left top;">Assembly(s)</div>
<div class="t" style="left:23px;top:366.24px;font-size:12px;font-weight:700;color:#3a3a3a;transform:scaleX(0.93);transform-origin:left top;">Date</div>
<div class="t" style="left:23px;top:394.04px;font-size:12px;font-weight:700;color:#3a3a3a;transform:scaleX(0.95);transform-origin:left top;">Customer:</div>
<div class="t" style="left:94px;top:324.04px;font-size:12px;font-weight:400;color:#3a3a3a;transform:scaleX(0.95);transform-origin:left top;">MRO-20...</div>
<div class="t" style="left:94px;top:344.24px;font-size:12px;font-weight:400;color:#3a3a3a;transform:scaleX(0.95);transform-origin:left top;">AH-430...</div>
<div class="t" style="left:98.5px;top:366.24px;font-size:12px;font-weight:400;color:#3a3a3a;transform:scaleX(0.95);transform-origin:left top;">2/16/2...</div>
<div class="t" style="left:84px;top:394.04px;font-size:12px;font-weight:400;color:#3a3a3a;transform:scaleX(0.92);transform-origin:left top;">MBTECH</div>
<div class="a" style="left:166px;top:321.4px;width:1px;height:60px;background:#a3aab5"></div>
<div class="a" style="left:30px;top:386.4px;width:272px;height:1px;background:#a3aab5"></div>
<div class="t" style="left:176.5px;top:324.04px;font-size:12px;font-weight:700;color:#3a3a3a;transform:scaleX(0.94);transform-origin:left top;">Order:</div>
<div class="t" style="left:176.5px;top:344.24px;font-size:12px;font-weight:700;color:#3a3a3a;transform:scaleX(0.94);transform-origin:left top;">Qty:</div>
<div class="t" style="left:216.5px;top:344.24px;font-size:12px;font-weight:400;color:#3a3a3a;transform:scaleX(0.95);transform-origin:left top;">5</div>
<svg style="left:271px;top:340.9px;" width="23" height="22" viewBox="0 0 23 22"><path d="M12.10,5.89 L14.14,5.91 L14.14,7.69 L12.10,7.71 L11.25,9.76 L12.68,11.22 L11.42,12.48 L9.96,11.05 L7.91,11.90 L7.89,13.94 L6.11,13.94 L6.09,11.90 L4.04,11.05 L2.58,12.48 L1.32,11.22 L2.75,9.76 L1.90,7.71 L-0.14,7.69 L-0.14,5.91 L1.90,5.89 L2.75,3.84 L1.32,2.38 L2.58,1.12 L4.04,2.55 L6.09,1.70 L6.11,-0.34 L7.89,-0.34 L7.91,1.70 L9.96,2.55 L11.42,1.12 L12.68,2.38 L11.25,3.84 Z M9.52,6.8 A2.52,2.52 0 1 0 4.48,6.8 A2.52,2.52 0 1 0 9.52,6.8 Z" fill="#111" fill-rule="evenodd"/><path d="M21.91,6.15 L23.36,6.17 L23.36,7.43 L21.91,7.45 L21.31,8.90 L22.32,9.93 L21.43,10.82 L20.40,9.81 L18.95,10.41 L18.93,11.86 L17.67,11.86 L17.65,10.41 L16.20,9.81 L15.17,10.82 L14.28,9.93 L15.29,8.90 L14.69,7.45 L13.24,7.43 L13.24,6.17 L14.69,6.15 L15.29,4.70 L14.28,3.67 L15.17,2.78 L16.20,3.79 L17.65,3.19 L17.67,1.74 L18.93,1.74 L18.95,3.19 L20.40,3.79 L21.43,2.78 L22.32,3.67 L21.31,4.70 Z M20.085,6.8 A1.7849999999999997,1.7849999999999997 0 1 0 16.515,6.8 A1.7849999999999997,1.7849999999999997 0 1 0 20.085,6.8 Z" fill="#111" fill-rule="evenodd"/><path d="M19.61,15.55 L21.06,15.57 L21.06,16.83 L19.61,16.85 L19.01,18.30 L20.02,19.33 L19.13,20.22 L18.10,19.21 L16.65,19.81 L16.63,21.26 L15.37,21.26 L15.35,19.81 L13.90,19.21 L12.87,20.22 L11.98,19.33 L12.99,18.30 L12.39,16.85 L10.94,16.83 L10.94,15.57 L12.39,15.55 L12.99,14.10 L11.98,13.07 L12.87,12.18 L13.90,13.19 L15.35,12.59 L15.37,11.14 L16.63,11.14 L16.65,12.59 L18.10,13.19 L19.13,12.18 L20.02,13.07 L19.01,14.10 Z M17.785,16.2 A1.7849999999999997,1.7849999999999997 0 1 0 14.215,16.2 A1.7849999999999997,1.7849999999999997 0 1 0 17.785,16.2 Z" fill="#111" fill-rule="evenodd"/></svg>
<div class="a" style="left:8px;top:420.20000000000005px;width:306px;height:96px;background:#bdcfee"></div>
<div class="a" style="left:8px;top:420.20000000000005px;width:10px;height:96px;background:#d9a521"></div>
<div class="t" style="left:23px;top:427.84px;font-size:12px;font-weight:700;color:#3a3a3a;transform:scaleX(0.93);transform-origin:left top;">Batch</div>
<div class="t" style="left:23px;top:448.04px;font-size:12px;font-weight:700;color:#3a3a3a;transform:scaleX(0.94);transform-origin:left top;">Assembly(s)</div>
<div class="t" style="left:23px;top:470.04px;font-size:12px;font-weight:700;color:#3a3a3a;transform:scaleX(0.93);transform-origin:left top;">Date</div>
<div class="t" style="left:23px;top:497.84px;font-size:12px;font-weight:700;color:#3a3a3a;transform:scaleX(0.95);transform-origin:left top;">Customer:</div>
<div class="t" style="left:94px;top:427.84px;font-size:12px;font-weight:400;color:#3a3a3a;transform:scaleX(0.95);transform-origin:left top;">WO-RB...</div>
<div class="t" style="left:94px;top:448.04px;font-size:12px;font-weight:400;color:#3a3a3a;transform:scaleX(0.95);transform-origin:left top;">1101430...</div>
<div class="t" style="left:98.5px;top:470.04px;font-size:12px;font-weight:400;color:#3a3a3a;transform:scaleX(0.95);transform-origin:left top;">1/15/2...</div>
<div class="a" style="left:166px;top:425.20000000000005px;width:1px;height:60px;background:#a3aab5"></div>
<div class="a" style="left:30px;top:490.20000000000005px;width:272px;height:1px;background:#a3aab5"></div>
<div class="t" style="left:176.5px;top:427.84px;font-size:12px;font-weight:700;color:#3a3a3a;transform:scaleX(0.94);transform-origin:left top;">Order:</div>
<div class="t" style="left:176.5px;top:448.04px;font-size:12px;font-weight:700;color:#3a3a3a;transform:scaleX(0.94);transform-origin:left top;">Qty:</div>
<div class="t" style="left:216.5px;top:448.04px;font-size:12px;font-weight:400;color:#3a3a3a;transform:scaleX(0.95);transform-origin:left top;">3</div>
<svg style="left:271px;top:444.70000000000005px;" width="23" height="22" viewBox="0 0 23 22"><path d="M12.10,5.89 L14.14,5.91 L14.14,7.69 L12.10,7.71 L11.25,9.76 L12.68,11.22 L11.42,12.48 L9.96,11.05 L7.91,11.90 L7.89,13.94 L6.11,13.94 L6.09,11.90 L4.04,11.05 L2.58,12.48 L1.32,11.22 L2.75,9.76 L1.90,7.71 L-0.14,7.69 L-0.14,5.91 L1.90,5.89 L2.75,3.84 L1.32,2.38 L2.58,1.12 L4.04,2.55 L6.09,1.70 L6.11,-0.34 L7.89,-0.34 L7.91,1.70 L9.96,2.55 L11.42,1.12 L12.68,2.38 L11.25,3.84 Z M9.52,6.8 A2.52,2.52 0 1 0 4.48,6.8 A2.52,2.52 0 1 0 9.52,6.8 Z" fill="#111" fill-rule="evenodd"/><path d="M21.91,6.15 L23.36,6.17 L23.36,7.43 L21.91,7.45 L21.31,8.90 L22.32,9.93 L21.43,10.82 L20.40,9.81 L18.95,10.41 L18.93,11.86 L17.67,11.86 L17.65,10.41 L16.20,9.81 L15.17,10.82 L14.28,9.93 L15.29,8.90 L14.69,7.45 L13.24,7.43 L13.24,6.17 L14.69,6.15 L15.29,4.70 L14.28,3.67 L15.17,2.78 L16.20,3.79 L17.65,3.19 L17.67,1.74 L18.93,1.74 L18.95,3.19 L20.40,3.79 L21.43,2.78 L22.32,3.67 L21.31,4.70 Z M20.085,6.8 A1.7849999999999997,1.7849999999999997 0 1 0 16.515,6.8 A1.7849999999999997,1.7849999999999997 0 1 0 20.085,6.8 Z" fill="#111" fill-rule="evenodd"/><path d="M19.61,15.55 L21.06,15.57 L21.06,16.83 L19.61,16.85 L19.01,18.30 L20.02,19.33 L19.13,20.22 L18.10,19.21 L16.65,19.81 L16.63,21.26 L15.37,21.26 L15.35,19.81 L13.90,19.21 L12.87,20.22 L11.98,19.33 L12.99,18.30 L12.39,16.85 L10.94,16.83 L10.94,15.57 L12.39,15.55 L12.99,14.10 L11.98,13.07 L12.87,12.18 L13.90,13.19 L15.35,12.59 L15.37,11.14 L16.63,11.14 L16.65,12.59 L18.10,13.19 L19.13,12.18 L20.02,13.07 L19.01,14.10 Z M17.785,16.2 A1.7849999999999997,1.7849999999999997 0 1 0 14.215,16.2 A1.7849999999999997,1.7849999999999997 0 1 0 17.785,16.2 Z" fill="#111" fill-rule="evenodd"/></svg>
<div class="a" style="left:1px;top:520.0px;width:317px;height:104px;background:#8f8f8f"></div>
<div class="a" style="left:8px;top:524.0px;width:306px;height:96px;background:#bdcfee"></div>
<div class="a" style="left:8px;top:524.0px;width:10px;height:96px;background:#d9a521"></div>
<div class="t" style="left:23px;top:531.64px;font-size:12px;font-weight:700;color:#3a3a3a;transform:scaleX(0.93);transform-origin:left top;">Batch</div>
<div class="t" style="left:23px;top:551.84px;font-size:12px;font-weight:700;color:#3a3a3a;transform:scaleX(0.94);transform-origin:left top;">Assembly(s)</div>
<div class="t" style="left:23px;top:573.84px;font-size:12px;font-weight:700;color:#3a3a3a;transform:scaleX(0.93);transform-origin:left top;">Date</div>
<div class="t" style="left:23px;top:601.64px;font-size:12px;font-weight:700;color:#3a3a3a;transform:scaleX(0.95);transform-origin:left top;">Customer:</div>
<div class="t" style="left:94px;top:531.64px;font-size:12px;font-weight:400;color:#3a3a3a;transform:scaleX(0.95);transform-origin:left top;">WO-RB...</div>
<div class="t" style="left:94px;top:551.84px;font-size:12px;font-weight:400;color:#3a3a3a;transform:scaleX(0.95);transform-origin:left top;">1001673...</div>
<div class="t" style="left:98.5px;top:573.84px;font-size:12px;font-weight:400;color:#3a3a3a;transform:scaleX(0.95);transform-origin:left top;">1/6/20...</div>
<div class="a" style="left:166px;top:529.0px;width:1px;height:60px;background:#a3aab5"></div>
<div class="a" style="left:30px;top:594.0px;width:272px;height:1px;background:#a3aab5"></div>
<div class="t" style="left:176.5px;top:531.64px;font-size:12px;font-weight:700;color:#3a3a3a;transform:scaleX(0.94);transform-origin:left top;">Order:</div>
<div class="t" style="left:176.5px;top:551.84px;font-size:12px;font-weight:700;color:#3a3a3a;transform:scaleX(0.94);transform-origin:left top;">Qty:</div>
<div class="t" style="left:216.5px;top:551.84px;font-size:12px;font-weight:400;color:#3a3a3a;transform:scaleX(0.95);transform-origin:left top;">4</div>
<svg style="left:271px;top:548.5px;" width="23" height="22" viewBox="0 0 23 22"><path d="M12.10,5.89 L14.14,5.91 L14.14,7.69 L12.10,7.71 L11.25,9.76 L12.68,11.22 L11.42,12.48 L9.96,11.05 L7.91,11.90 L7.89,13.94 L6.11,13.94 L6.09,11.90 L4.04,11.05 L2.58,12.48 L1.32,11.22 L2.75,9.76 L1.90,7.71 L-0.14,7.69 L-0.14,5.91 L1.90,5.89 L2.75,3.84 L1.32,2.38 L2.58,1.12 L4.04,2.55 L6.09,1.70 L6.11,-0.34 L7.89,-0.34 L7.91,1.70 L9.96,2.55 L11.42,1.12 L12.68,2.38 L11.25,3.84 Z M9.52,6.8 A2.52,2.52 0 1 0 4.48,6.8 A2.52,2.52 0 1 0 9.52,6.8 Z" fill="#111" fill-rule="evenodd"/><path d="M21.91,6.15 L23.36,6.17 L23.36,7.43 L21.91,7.45 L21.31,8.90 L22.32,9.93 L21.43,10.82 L20.40,9.81 L18.95,10.41 L18.93,11.86 L17.67,11.86 L17.65,10.41 L16.20,9.81 L15.17,10.82 L14.28,9.93 L15.29,8.90 L14.69,7.45 L13.24,7.43 L13.24,6.17 L14.69,6.15 L15.29,4.70 L14.28,3.67 L15.17,2.78 L16.20,3.79 L17.65,3.19 L17.67,1.74 L18.93,1.74 L18.95,3.19 L20.40,3.79 L21.43,2.78 L22.32,3.67 L21.31,4.70 Z M20.085,6.8 A1.7849999999999997,1.7849999999999997 0 1 0 16.515,6.8 A1.7849999999999997,1.7849999999999997 0 1 0 20.085,6.8 Z" fill="#111" fill-rule="evenodd"/><path d="M19.61,15.55 L21.06,15.57 L21.06,16.83 L19.61,16.85 L19.01,18.30 L20.02,19.33 L19.13,20.22 L18.10,19.21 L16.65,19.81 L16.63,21.26 L15.37,21.26 L15.35,19.81 L13.90,19.21 L12.87,20.22 L11.98,19.33 L12.99,18.30 L12.39,16.85 L10.94,16.83 L10.94,15.57 L12.39,15.55 L12.99,14.10 L11.98,13.07 L12.87,12.18 L13.90,13.19 L15.35,12.59 L15.37,11.14 L16.63,11.14 L16.65,12.59 L18.10,13.19 L19.13,12.18 L20.02,13.07 L19.01,14.10 Z M17.785,16.2 A1.7849999999999997,1.7849999999999997 0 1 0 14.215,16.2 A1.7849999999999997,1.7849999999999997 0 1 0 17.785,16.2 Z" fill="#111" fill-rule="evenodd"/></svg>
<div class="a" style="left:8px;top:627.8px;width:306px;height:96px;background:#bdcfee"></div>
<div class="a" style="left:8px;top:627.8px;width:10px;height:96px;background:#d9a521"></div>
<div class="t" style="left:23px;top:635.44px;font-size:12px;font-weight:700;color:#3a3a3a;transform:scaleX(0.93);transform-origin:left top;">Batch</div>
<div class="t" style="left:23px;top:655.64px;font-size:12px;font-weight:700;color:#3a3a3a;transform:scaleX(0.94);transform-origin:left top;">Assembly(s)</div>
<div class="t" style="left:23px;top:677.64px;font-size:12px;font-weight:700;color:#3a3a3a;transform:scaleX(0.93);transform-origin:left top;">Date</div>
<div class="t" style="left:23px;top:705.44px;font-size:12px;font-weight:700;color:#3a3a3a;transform:scaleX(0.95);transform-origin:left top;">Customer:</div>
<div class="t" style="left:94px;top:635.44px;font-size:12px;font-weight:400;color:#3a3a3a;transform:scaleX(0.95);transform-origin:left top;">WO-RB...</div>
<div class="t" style="left:94px;top:655.64px;font-size:12px;font-weight:400;color:#3a3a3a;transform:scaleX(0.95);transform-origin:left top;">1001673...</div>
<div class="t" style="left:98.5px;top:677.64px;font-size:12px;font-weight:400;color:#3a3a3a;transform:scaleX(0.95);transform-origin:left top;">1/6/20...</div>
<div class="a" style="left:166px;top:632.8px;width:1px;height:60px;background:#a3aab5"></div>
<div class="a" style="left:30px;top:697.8px;width:272px;height:1px;background:#a3aab5"></div>
<div class="t" style="left:176.5px;top:635.44px;font-size:12px;font-weight:700;color:#3a3a3a;transform:scaleX(0.94);transform-origin:left top;">Order:</div>
<div class="t" style="left:176.5px;top:655.64px;font-size:12px;font-weight:700;color:#3a3a3a;transform:scaleX(0.94);transform-origin:left top;">Qty:</div>
<div class="t" style="left:216.5px;top:655.64px;font-size:12px;font-weight:400;color:#3a3a3a;transform:scaleX(0.95);transform-origin:left top;">4</div>
<svg style="left:271px;top:652.3px;" width="23" height="22" viewBox="0 0 23 22"><path d="M12.10,5.89 L14.14,5.91 L14.14,7.69 L12.10,7.71 L11.25,9.76 L12.68,11.22 L11.42,12.48 L9.96,11.05 L7.91,11.90 L7.89,13.94 L6.11,13.94 L6.09,11.90 L4.04,11.05 L2.58,12.48 L1.32,11.22 L2.75,9.76 L1.90,7.71 L-0.14,7.69 L-0.14,5.91 L1.90,5.89 L2.75,3.84 L1.32,2.38 L2.58,1.12 L4.04,2.55 L6.09,1.70 L6.11,-0.34 L7.89,-0.34 L7.91,1.70 L9.96,2.55 L11.42,1.12 L12.68,2.38 L11.25,3.84 Z M9.52,6.8 A2.52,2.52 0 1 0 4.48,6.8 A2.52,2.52 0 1 0 9.52,6.8 Z" fill="#111" fill-rule="evenodd"/><path d="M21.91,6.15 L23.36,6.17 L23.36,7.43 L21.91,7.45 L21.31,8.90 L22.32,9.93 L21.43,10.82 L20.40,9.81 L18.95,10.41 L18.93,11.86 L17.67,11.86 L17.65,10.41 L16.20,9.81 L15.17,10.82 L14.28,9.93 L15.29,8.90 L14.69,7.45 L13.24,7.43 L13.24,6.17 L14.69,6.15 L15.29,4.70 L14.28,3.67 L15.17,2.78 L16.20,3.79 L17.65,3.19 L17.67,1.74 L18.93,1.74 L18.95,3.19 L20.40,3.79 L21.43,2.78 L22.32,3.67 L21.31,4.70 Z M20.085,6.8 A1.7849999999999997,1.7849999999999997 0 1 0 16.515,6.8 A1.7849999999999997,1.7849999999999997 0 1 0 20.085,6.8 Z" fill="#111" fill-rule="evenodd"/><path d="M19.61,15.55 L21.06,15.57 L21.06,16.83 L19.61,16.85 L19.01,18.30 L20.02,19.33 L19.13,20.22 L18.10,19.21 L16.65,19.81 L16.63,21.26 L15.37,21.26 L15.35,19.81 L13.90,19.21 L12.87,20.22 L11.98,19.33 L12.99,18.30 L12.39,16.85 L10.94,16.83 L10.94,15.57 L12.39,15.55 L12.99,14.10 L11.98,13.07 L12.87,12.18 L13.90,13.19 L15.35,12.59 L15.37,11.14 L16.63,11.14 L16.65,12.59 L18.10,13.19 L19.13,12.18 L20.02,13.07 L19.01,14.10 Z M17.785,16.2 A1.7849999999999997,1.7849999999999997 0 1 0 14.215,16.2 A1.7849999999999997,1.7849999999999997 0 1 0 17.785,16.2 Z" fill="#111" fill-rule="evenodd"/></svg>
</div>
<div class="a" style="left:433px;top:242px;width:16px;height:632px;background:#f0f0f0"></div>
<div class="a" style="left:433px;top:259px;width:16px;height:179px;background:#bfbfbf"></div>
<svg style="left:436.5px;top:246px;" width="9" height="9" viewBox="0 0 9 9"><path d="M1,5 L4.5,1.5 L8,5" fill="none" stroke="#606060" stroke-width="1.7"/></svg>
<svg style="left:436.5px;top:860px;" width="9" height="9" viewBox="0 0 9 9"><path d="M1,1.5 L4.5,5 L8,1.5" fill="none" stroke="#606060" stroke-width="1.7"/></svg>
<div class="a" style="left:113px;top:874px;width:336px;height:15px;background:#f0f0f0"></div>
<div class="a" style="left:130px;top:874px;width:281px;height:15px;background:#bfbfbf"></div>
<svg style="left:118px;top:877px;" width="9" height="9" viewBox="0 0 9 9"><path d="M5,1 L1.5,4.5 L5,8" fill="none" stroke="#606060" stroke-width="1.7"/></svg>
<svg style="left:418px;top:877px;" width="9" height="9" viewBox="0 0 9 9"><path d="M1.5,1 L5,4.5 L1.5,8" fill="none" stroke="#606060" stroke-width="1.7"/></svg>
<svg style="left:130px;top:904px;" width="14" height="14" viewBox="0 0 14 14"><rect x="0.5" y="0.5" width="13" height="13" rx="1.5" fill="#d6d6d6" stroke="#c8c8c8"/><path d="M3,3 V11" stroke="#f4f4f4" stroke-width="1.5"/><path d="M7.5,3 L4,7 L7.5,11 Z M11.5,3 L8,7 L11.5,11 Z" fill="#f4f4f4"/></svg>
<svg style="left:160px;top:904px;" width="14" height="14" viewBox="0 0 14 14"><rect x="0.5" y="0.5" width="13" height="13" rx="1.5" fill="#d6d6d6" stroke="#c8c8c8"/><path d="M4,3 V11" stroke="#f4f4f4" stroke-width="1.5"/><path d="M10,3 L5.5,7 L10,11 Z" fill="#f4f4f4"/></svg>
<div class="t" style="left:182.4px;top:905.42px;font-size:12.5px;font-weight:400;color:#222;transform:scaleX(0.95);transform-origin:left top;">Page 1 of 6</div>
<svg style="left:249.5px;top:904px;" width="14" height="14" viewBox="0 0 14 14"><rect x="0" y="0" width="14" height="14" rx="1.5" fill="#111"/><path d="M10,3 V11" stroke="#fff" stroke-width="1.6"/><path d="M4,3 L8.5,7 L4,11 Z" fill="#fff"/></svg>
<svg style="left:279.5px;top:904px;" width="14" height="14" viewBox="0 0 14 14"><rect x="0" y="0" width="14" height="14" rx="1.5" fill="#111"/><path d="M11,3 V11" stroke="#fff" stroke-width="1.5"/><path d="M2.5,3 L6,7 L2.5,11 Z M6.5,3 L10,7 L6.5,11 Z" fill="#fff"/></svg>
<div class="t" style="left:305.5px;top:905.42px;font-size:12.5px;font-weight:400;color:#222;transform:scaleX(0.87);transform-origin:left top;">Go To Page</div>
<div class="a" style="left:368px;top:899px;width:75px;height:22px;background:#fff;border:1px solid #a5a5a5"></div>
<div class="a" style="left:426px;top:901px;width:15px;height:18px;background:linear-gradient(#f3f3f3,#e3e3e3);border:1px solid #adadad"></div>
<svg style="left:429px;top:906px;" width="9" height="8" viewBox="0 0 9 8"><path d="M1,1.5 L4.5,5 L8,1.5" fill="none" stroke="#555" stroke-width="1.3"/></svg>
<div class="t" style="left:373px;top:905.42px;font-size:12.5px;font-weight:400;color:#333;">1</div>
<div class="a" style="left:447.5px;top:907px;width:1.5px;height:9px;background:#c8501e"></div>
<div class="a" style="left:112px;top:929px;width:337px;height:16px;background:#f0f0f0"></div>
<div class="a" style="left:130px;top:929px;width:211px;height:16px;background:#bfbfbf"></div>
<svg style="left:117px;top:933px;" width="9" height="9" viewBox="0 0 9 9"><path d="M5,1 L1.5,4.5 L5,8" fill="none" stroke="#606060" stroke-width="1.7"/></svg>
<svg style="left:436px;top:933px;" width="9" height="9" viewBox="0 0 9 9"><path d="M1.5,1 L5,4.5 L1.5,8" fill="none" stroke="#606060" stroke-width="1.7"/></svg>
<div class="t" style="left:455.5px;top:214.86px;font-size:23.2px;font-weight:400;color:#1e1e1e;transform:scaleX(0.99);transform-origin:left top;-webkit-text-stroke:0.5px #fff;">Priority Management</div>
<div class="a" style="left:453px;top:250px;width:1091px;height:695px;background:#c0ced6;border:1px solid #b2b2b2"></div>
<div class="a" style="left:681px;top:214px;width:32px;height:41px;background:#c0ced6;border:1px solid #b2b2b2;border-bottom:none"></div>
<svg style="left:689px;top:218px;" width="18" height="19" viewBox="0 0 18 19"><rect x="0" y="0" width="14" height="18.5" fill="#111"/><path d="M6,14 L14,5 L16,7 L8,16 L5.5,16.5 Z" fill="#111" stroke="#c0ced6" stroke-width="1"/><path d="M13.5,4 L15.2,2.2 L17.6,4.6 L15.8,6.4 Z" fill="#111"/></svg>
<svg style="left:729px;top:219px;" width="19" height="18" viewBox="0 0 19 18"><rect x="0.5" y="0.5" width="17.5" height="12" rx="3" fill="#111"/><rect x="2" y="2" width="14.5" height="9" rx="1.2" fill="none" stroke="#fff" stroke-width="1"/><path d="M5.6,2 V11 M9.25,2 V11 M12.9,2 V11 M2,6.5 H16.5" stroke="#fff" stroke-width="1"/><path d="M1.5,16.5 L3,14 M5.5,17 L6.2,14 M9.25,17 V14 M13,17 L12.3,14 M17,16.5 L15.5,14" stroke="#111" stroke-width="1"/></svg>
<div class="a" style="left:496px;top:255px;width:1002px;height:345px;background:#c0ced6;border:1px solid #b2b2b2"></div>
<div class="a" style="left:509px;top:267px;width:976px;height:320px;background:#fff"></div>
<div class="t" style="left:518.6px;top:280.76px;font-size:18px;font-weight:400;color:#2a2a2a;transform:scaleX(0.93);transform-origin:left top;-webkit-text-stroke:0.35px #fff;">Priority Categories</div>
<svg style="left:527.5px;top:309.5px;" width="13" height="13" viewBox="0 0 13 13"><circle cx="6.5" cy="6.5" r="6.3" fill="#111"/><path d="M6.5,3 V10 M3,6.5 H10" stroke="#fff" stroke-width="2.2"/></svg>
<svg style="left:561.5px;top:309.5px;" width="13" height="13" viewBox="0 0 13 13"><circle cx="6.5" cy="6.5" r="6.3" fill="#111"/><path d="M3,6.5 H10" stroke="#fff" stroke-width="2.4"/></svg>
<svg style="left:1419.5px;top:309.5px;" width="13" height="13" viewBox="0 0 13 13"><circle cx="6.5" cy="6.5" r="6.3" fill="#111"/><path d="M6.5,13 V6 M3.5,7.5 L6.5,3.5 L9.5,7.5" fill="none" stroke="#fff" stroke-width="2"/></svg>
<svg style="left:1453.5px;top:309.5px;" width="13" height="13" viewBox="0 0 13 13"><circle cx="6.5" cy="6.5" r="6.3" fill="#c4c4c4"/><path d="M6.5,0 V7 M3.5,5.5 L6.5,9.5 L9.5,5.5" fill="none" stroke="#fff" stroke-width="2"/></svg>
<div class="a" style="left:519px;top:331px;width:956px;height:199px;background:#fff;border:1px solid #d5d5d5"></div>
<div class="a" style="left:520px;top:429.5px;width:954px;height:25px;background:#b1d5ee"></div>
<div class="a" style="left:520px;top:354px;width:954px;height:1px;background:#d5d5d5"></div>
<div class="a" style="left:520px;top:379px;width:954px;height:1px;background:#d5d5d5"></div>
<div class="a" style="left:520px;top:404px;width:954px;height:1px;background:#d5d5d5"></div>
<div class="a" style="left:520px;top:429.5px;width:954px;height:1px;background:#d5d5d5"></div>
<div class="a" style="left:520px;top:454.5px;width:954px;height:1px;background:#d5d5d5"></div>
<div class="a" style="left:998px;top:332px;width:1px;height:122.5px;background:#d5d5d5"></div>
<div class="a" style="left:1098px;top:332px;width:1px;height:122.5px;background:#d5d5d5"></div>
<div class="a" style="left:1223px;top:332px;width:1px;height:122.5px;background:#d5d5d5"></div>
<div class="a" style="left:1348px;top:332px;width:1px;height:122.5px;background:#d5d5d5"></div>
<div class="t" style="left:524.6px;top:337.59px;font-size:12.3px;font-weight:400;color:#333;transform:scaleX(0.93);transform-origin:left top;">Name</div>
<div class="t" style="left:1003px;top:337.59px;font-size:12.3px;font-weight:400;color:#333;transform:scaleX(0.93);transform-origin:left top;">Color</div>
<div class="t" style="left:1103.3px;top:337.59px;font-size:12.3px;font-weight:400;color:#333;transform:scaleX(0.98);transform-origin:left top;">High Priority</div>
<div class="t" style="left:1228.4px;top:337.59px;font-size:12.3px;font-weight:400;color:#333;transform:scaleX(0.98);transform-origin:left top;">Normal Priority</div>
<div class="t" style="left:1353.3px;top:337.59px;font-size:12.3px;font-weight:400;color:#333;transform:scaleX(0.97);transform-origin:left top;">Low Priority</div>
<div class="t" style="left:524.6px;top:361.69px;font-size:12.3px;font-weight:400;color:#333;transform:scaleX(0.9);transform-origin:left top;">HIGH</div>
<div class="a" style="left:1004px;top:357.3px;width:89px;height:19.5px;background:#fff;border:1px solid #a0a0a0"></div>
<div class="a" style="left:1009px;top:360.0px;width:61px;height:14px;background:#ff0000"></div>
<div class="a" style="left:1076px;top:359.3px;width:15px;height:15.5px;background:linear-gradient(#f4f4f4,#e2e2e2);border:1px solid #a8a8a8"></div>
<svg style="left:1079.0px;top:363.55px;" width="9" height="8" viewBox="0 0 9 8"><path d="M1,1.5 L4.5,5 L8,1.5" fill="none" stroke="#555" stroke-width="1.3"/></svg>
<div class="a" style="left:1155px;top:361.3px;width:13px;height:13px;background:#fff;border:1px solid #707070"></div>
<svg style="left:1155px;top:361.3px;" width="13" height="13" viewBox="0 0 13 13"><path d="M2.5,6.5 L5.3,9.5 L10.5,2.8" fill="none" stroke="#222" stroke-width="1.7"/></svg>
<div class="a" style="left:1280.3px;top:361.3px;width:13px;height:13px;background:#fff;border:1px solid #707070"></div>
<div class="a" style="left:1405.3px;top:361.3px;width:13px;height:13px;background:#fff;border:1px solid #707070"></div>
<div class="t" style="left:524.6px;top:386.69px;font-size:12.3px;font-weight:400;color:#333;transform:scaleX(0.9);transform-origin:left top;">NORMAL</div>
<div class="a" style="left:1004px;top:382.3px;width:89px;height:19.5px;background:#fff;border:1px solid #a0a0a0"></div>
<div class="a" style="left:1009px;top:385.0px;width:61px;height:14px;background:#008000"></div>
<div class="a" style="left:1076px;top:384.3px;width:15px;height:15.5px;background:linear-gradient(#f4f4f4,#e2e2e2);border:1px solid #a8a8a8"></div>
<svg style="left:1079.0px;top:388.55px;" width="9" height="8" viewBox="0 0 9 8"><path d="M1,1.5 L4.5,5 L8,1.5" fill="none" stroke="#555" stroke-width="1.3"/></svg>
<div class="a" style="left:1155px;top:386.3px;width:13px;height:13px;background:#fff;border:1px solid #707070"></div>
<div class="a" style="left:1280.3px;top:386.3px;width:13px;height:13px;background:#fff;border:1px solid #707070"></div>
<div class="a" style="left:1405.3px;top:386.3px;width:13px;height:13px;background:#fff;border:1px solid #707070"></div>
<div class="t" style="left:524.6px;top:411.69px;font-size:12.3px;font-weight:400;color:#333;transform:scaleX(0.9);transform-origin:left top;">LOW</div>
<div class="a" style="left:1004px;top:407.3px;width:89px;height:19.5px;background:#fff;border:1px solid #a0a0a0"></div>
<div class="a" style="left:1009px;top:410.0px;width:61px;height:14px;background:#0000ff"></div>
<div class="a" style="left:1076px;top:409.3px;width:15px;height:15.5px;background:linear-gradient(#f4f4f4,#e2e2e2);border:1px solid #a8a8a8"></div>
<svg style="left:1079.0px;top:413.55px;" width="9" height="8" viewBox="0 0 9 8"><path d="M1,1.5 L4.5,5 L8,1.5" fill="none" stroke="#555" stroke-width="1.3"/></svg>
<div class="a" style="left:1155px;top:411.3px;width:13px;height:13px;background:#fff;border:1px solid #707070"></div>
<div class="a" style="left:1280.3px;top:411.3px;width:13px;height:13px;background:#fff;border:1px solid #707070"></div>
<div class="a" style="left:1405.3px;top:411.3px;width:13px;height:13px;background:#fff;border:1px solid #707070"></div>
<div class="t" style="left:524.6px;top:436.89px;font-size:12.3px;font-weight:400;color:#333;transform:scaleX(0.9);transform-origin:left top;">OTHER</div>
<div class="a" style="left:1004px;top:432.5px;width:89px;height:19.5px;background:#fff;border:1px solid #569de5"></div>
<div class="a" style="left:1009px;top:435.2px;width:61px;height:14px;background:#e07f31"></div>
<div class="a" style="left:1076px;top:434.5px;width:15px;height:15.5px;background:#d5e8f8;border:1px solid #3c8ad6"></div>
<svg style="left:1079.0px;top:438.75px;" width="9" height="8" viewBox="0 0 9 8"><path d="M1,1.5 L4.5,5 L8,1.5" fill="none" stroke="#555" stroke-width="1.3"/></svg>
<div class="a" style="left:1155px;top:436.5px;width:13px;height:13px;background:#fff;border:1px solid #707070"></div>
<div class="a" style="left:1280.3px;top:436.5px;width:13px;height:13px;background:#fff;border:1px solid #707070"></div>
<svg style="left:1280.3px;top:436.5px;" width="13" height="13" viewBox="0 0 13 13"><path d="M2.5,6.5 L5.3,9.5 L10.5,2.8" fill="none" stroke="#222" stroke-width="1.7"/></svg>
<div class="a" style="left:1405.3px;top:436.5px;width:13px;height:13px;background:#fff;border:1px solid #707070"></div>
<svg style="left:1405.3px;top:436.5px;" width="13" height="13" viewBox="0 0 13 13"><path d="M2.5,6.5 L5.3,9.5 L10.5,2.8" fill="none" stroke="#222" stroke-width="1.7"/></svg>
<div class="a" style="left:1283px;top:553.5px;width:91px;height:21px;background:linear-gradient(#f2f2f2,#e4e4e4);border:1px solid #acacac"></div>
<div class="t" style="left:1326.4px;top:557.92px;font-size:12.5px;font-weight:400;color:#222;transform:scaleX(0.95);transform-origin:left top;">Save</div>
<div class="a" style="left:1384px;top:553.5px;width:91px;height:21px;background:linear-gradient(#f2f2f2,#e4e4e4);border:1px solid #acacac"></div>
<div class="t" style="left:1412px;top:557.92px;font-size:12.5px;font-weight:400;color:#222;transform:scaleX(0.95);transform-origin:left top;">Cancel</div>
<svg style="left:1299px;top:556.5px;" width="12" height="12" viewBox="0 0 12 12"><path d="M0,1 Q0,0 1,0 L10,0 L12,2 L12,11 Q12,12 11,12 L1,12 Q0,12 0,11 Z" fill="#222"/><rect x="3" y="0.8" width="6" height="4" fill="#ddd"/><rect x="6.5" y="1.3" width="1.5" height="3" fill="#222"/><rect x="2.2" y="7" width="7.6" height="4.3" fill="#eee"/></svg>
<div class="t" style="left:466.3px;top:618.57px;font-size:20px;font-weight:400;color:#2a2a2a;transform:scaleX(0.9);transform-origin:left top;-webkit-text-stroke:0.45px #c0ced6;">1-Assembly</div>
<svg style="left:574px;top:619.5px;" width="16" height="16" viewBox="0 0 16 16"><path d="M2,2 L14,14 M14,2 L2,14" stroke="#8a9297" stroke-width="3.6"/></svg>
<div class="a" style="left:466px;top:645px;width:513px;height:287px;background:#fff"></div>
<div class="a" style="left:466px;top:645px;width:513px;height:287px;overflow:hidden">
<div class="a" style="left:-466px;top:-645px;width:1572px;height:1022px">
<div class="a" style="left:473px;top:651px;width:500px;height:90px;background:#bdcfee"></div>
<div class="a" style="left:473px;top:651px;width:10px;height:90px;background:#d9a521"></div>
<div class="t" style="left:488px;top:660.54px;font-size:12px;font-weight:700;color:#3a3a3a;transform:scaleX(0.94);transform-origin:left top;">Priority:</div>
<div class="t" style="left:488px;top:682.54px;font-size:12px;font-weight:700;color:#3a3a3a;transform:scaleX(0.94);transform-origin:left top;">Batch:</div>
<div class="t" style="left:488px;top:702.64px;font-size:12px;font-weight:700;color:#3a3a3a;transform:scaleX(0.94);transform-origin:left top;">Assembly:</div>
<div class="t" style="left:488px;top:722.84px;font-size:12px;font-weight:700;color:#3a3a3a;transform:scaleX(0.94);transform-origin:left top;">Activated:</div>
<div class="t" style="left:549px;top:682.54px;font-size:12px;font-weight:400;color:#3a3a3a;transform:scaleX(0.95);transform-origin:left top;">MO-01</div>
<div class="t" style="left:549px;top:702.64px;font-size:12px;font-weight:400;color:#3a3a3a;transform:scaleX(0.95);transform-origin:left top;">Product - A</div>
<div class="t" style="left:549px;top:722.84px;font-size:12px;font-weight:400;color:#3a3a3a;transform:scaleX(0.95);transform-origin:left top;">12/6/2023 12:39:10 AM</div>
<div class="a" style="left:549px;top:656px;width:162px;height:19.5px;background:#fff;border:1px solid #7a7a7a"></div>
<div class="t" style="right:905px;top:660.34px;font-size:12px;font-weight:400;color:#3a3a3a;transform:scaleX(0.95);transform-origin:right top;">HIGH</div>
<div class="a" style="left:673px;top:659px;width:14px;height:14px;background:#ff0000"></div>
<div class="a" style="left:694px;top:658.3px;width:15px;height:15.5px;background:linear-gradient(#f4f4f4,#e2e2e2);border:1px solid #a8a8a8"></div>
<svg style="left:697.0px;top:662.55px;" width="9" height="8" viewBox="0 0 9 8"><path d="M1,1.5 L4.5,5 L8,1.5" fill="none" stroke="#555" stroke-width="1.3"/></svg>
<div class="a" style="left:728px;top:656px;width:1px;height:80px;background:#a3aab5"></div>
<div class="t" style="left:738.7px;top:658.84px;font-size:12px;font-weight:700;color:#3a3a3a;transform:scaleX(0.94);transform-origin:left top;">Rank:</div>
<div class="t" style="left:800.6px;top:658.84px;font-size:12px;font-weight:700;color:#3a3a3a;">1</div>
<div class="t" style="left:738.7px;top:679.04px;font-size:12px;font-weight:700;color:#3a3a3a;transform:scaleX(0.94);transform-origin:left top;">Order:</div>
<div class="t" style="left:738.7px;top:698.84px;font-size:12px;font-weight:700;color:#3a3a3a;transform:scaleX(0.94);transform-origin:left top;">Qty:</div>
<div class="t" style="left:800.6px;top:698.84px;font-size:12px;font-weight:400;color:#3a3a3a;">1</div>
<div class="t" style="left:738.7px;top:718.64px;font-size:12px;font-weight:700;color:#3a3a3a;transform:scaleX(0.94);transform-origin:left top;">Customer:</div>
<div class="t" style="left:799.6px;top:718.64px;font-size:12px;font-weight:400;color:#3a3a3a;transform:scaleX(0.95);transform-origin:left top;">Aegis</div>
<div class="a" style="left:473px;top:749px;width:500px;height:90px;background:#bdcfee"></div>
<div class="a" style="left:473px;top:749px;width:10px;height:90px;background:#d9a521"></div>
<div class="t" style="left:488px;top:758.54px;font-size:12px;font-weight:700;color:#3a3a3a;transform:scaleX(0.94);transform-origin:left top;">Priority:</div>
<div class="t" style="left:488px;top:780.54px;font-size:12px;font-weight:700;color:#3a3a3a;transform:scaleX(0.94);transform-origin:left top;">Batch:</div>
<div class="t" style="left:488px;top:800.64px;font-size:12px;font-weight:700;color:#3a3a3a;transform:scaleX(0.94);transform-origin:left top;">Assembly:</div>
<div class="t" style="left:488px;top:820.84px;font-size:12px;font-weight:700;color:#3a3a3a;transform:scaleX(0.94);transform-origin:left top;">Activated:</div>
<div class="t" style="left:549px;top:780.54px;font-size:12px;font-weight:400;color:#3a3a3a;transform:scaleX(0.95);transform-origin:left top;">MO-02</div>
<div class="t" style="left:549px;top:800.64px;font-size:12px;font-weight:400;color:#3a3a3a;transform:scaleX(0.95);transform-origin:left top;">Product - A</div>
<div class="t" style="left:549px;top:820.84px;font-size:12px;font-weight:400;color:#3a3a3a;transform:scaleX(0.95);transform-origin:left top;">12/6/2023 12:40:45 AM</div>
<div class="a" style="left:549px;top:754px;width:162px;height:19.5px;background:#fff;border:1px solid #7a7a7a"></div>
<div class="t" style="right:905px;top:758.34px;font-size:12px;font-weight:400;color:#3a3a3a;transform:scaleX(0.95);transform-origin:right top;">NORMAL</div>
<div class="a" style="left:673px;top:757px;width:14px;height:14px;background:#008000"></div>
<div class="a" style="left:694px;top:756.3px;width:15px;height:15.5px;background:linear-gradient(#f4f4f4,#e2e2e2);border:1px solid #a8a8a8"></div>
<svg style="left:697.0px;top:760.55px;" width="9" height="8" viewBox="0 0 9 8"><path d="M1,1.5 L4.5,5 L8,1.5" fill="none" stroke="#555" stroke-width="1.3"/></svg>
<div class="a" style="left:728px;top:754px;width:1px;height:80px;background:#a3aab5"></div>
<div class="t" style="left:738.7px;top:756.84px;font-size:12px;font-weight:700;color:#3a3a3a;transform:scaleX(0.94);transform-origin:left top;">Rank:</div>
<div class="t" style="left:800.6px;top:756.84px;font-size:12px;font-weight:700;color:#3a3a3a;">2</div>
<div class="t" style="left:738.7px;top:777.04px;font-size:12px;font-weight:700;color:#3a3a3a;transform:scaleX(0.94);transform-origin:left top;">Order:</div>
<div class="t" style="left:738.7px;top:796.84px;font-size:12px;font-weight:700;color:#3a3a3a;transform:scaleX(0.94);transform-origin:left top;">Qty:</div>
<div class="t" style="left:800.6px;top:796.84px;font-size:12px;font-weight:400;color:#3a3a3a;">1</div>
<div class="t" style="left:738.7px;top:816.64px;font-size:12px;font-weight:700;color:#3a3a3a;transform:scaleX(0.94);transform-origin:left top;">Customer:</div>
<div class="t" style="left:799.6px;top:816.64px;font-size:12px;font-weight:400;color:#3a3a3a;transform:scaleX(0.95);transform-origin:left top;">Aegis</div>
<div class="a" style="left:473px;top:847px;width:500px;height:90px;background:#bdcfee"></div>
<div class="a" style="left:473px;top:847px;width:10px;height:90px;background:#d9a521"></div>
<div class="t" style="left:488px;top:856.54px;font-size:12px;font-weight:700;color:#3a3a3a;transform:scaleX(0.94);transform-origin:left top;">Priority:</div>
<div class="t" style="left:488px;top:878.54px;font-size:12px;font-weight:700;color:#3a3a3a;transform:scaleX(0.94);transform-origin:left top;">Batch:</div>
<div class="t" style="left:488px;top:898.64px;font-size:12px;font-weight:700;color:#3a3a3a;transform:scaleX(0.94);transform-origin:left top;">Assembly:</div>
<div class="t" style="left:488px;top:918.84px;font-size:12px;font-weight:700;color:#3a3a3a;transform:scaleX(0.94);transform-origin:left top;">Activated:</div>
<div class="t" style="left:549px;top:878.54px;font-size:12px;font-weight:400;color:#3a3a3a;transform:scaleX(0.95);transform-origin:left top;">MO-03</div>
<div class="t" style="left:549px;top:898.64px;font-size:12px;font-weight:400;color:#3a3a3a;transform:scaleX(0.95);transform-origin:left top;">Product - A</div>
<div class="t" style="left:549px;top:918.84px;font-size:12px;font-weight:400;color:#3a3a3a;transform:scaleX(0.95);transform-origin:left top;">12/6/2023 12:41:17 AM</div>
<div class="a" style="left:549px;top:852px;width:162px;height:19.5px;background:#fff;border:1px solid #7a7a7a"></div>
<div class="t" style="right:905px;top:856.34px;font-size:12px;font-weight:400;color:#3a3a3a;transform:scaleX(0.95);transform-origin:right top;">LOW</div>
<div class="a" style="left:673px;top:855px;width:14px;height:14px;background:#0000ff"></div>
<div class="a" style="left:694px;top:854.3px;width:15px;height:15.5px;background:linear-gradient(#f4f4f4,#e2e2e2);border:1px solid #a8a8a8"></div>
<svg style="left:697.0px;top:858.55px;" width="9" height="8" viewBox="0 0 9 8"><path d="M1,1.5 L4.5,5 L8,1.5" fill="none" stroke="#555" stroke-width="1.3"/></svg>
<div class="a" style="left:728px;top:852px;width:1px;height:80px;background:#a3aab5"></div>
<div class="t" style="left:738.7px;top:854.84px;font-size:12px;font-weight:700;color:#3a3a3a;transform:scaleX(0.94);transform-origin:left top;">Rank:</div>
<div class="t" style="left:800.6px;top:854.84px;font-size:12px;font-weight:700;color:#3a3a3a;">3</div>
<div class="t" style="left:738.7px;top:875.04px;font-size:12px;font-weight:700;color:#3a3a3a;transform:scaleX(0.94);transform-origin:left top;">Order:</div>
<div class="t" style="left:738.7px;top:894.84px;font-size:12px;font-weight:700;color:#3a3a3a;transform:scaleX(0.94);transform-origin:left top;">Qty:</div>
<div class="t" style="left:800.6px;top:894.84px;font-size:12px;font-weight:400;color:#3a3a3a;">1</div>
<div class="t" style="left:738.7px;top:914.64px;font-size:12px;font-weight:700;color:#3a3a3a;transform:scaleX(0.94);transform-origin:left top;">Customer:</div>
<div class="t" style="left:799.6px;top:914.64px;font-size:12px;font-weight:400;color:#3a3a3a;transform:scaleX(0.95);transform-origin:left top;">Aegis</div>
</div></div>
<div class="a" style="left:1001px;top:645px;width:513px;height:287px;background:#fff;border-top:1px solid #b8bfc4;border-right:1px solid #b8bfc4"></div>
<div class="a" style="left:1001px;top:646px;width:512px;height:99px;background:#bcd8ec"></div>
<div class="a" style="left:1007px;top:650.8px;width:500px;height:90px;background:#bdcfee"></div>
<div class="a" style="left:1007px;top:650.8px;width:10px;height:90px;background:#d9a521"></div>
<div class="t" style="left:1022px;top:660.34px;font-size:12px;font-weight:700;color:#3a3a3a;transform:scaleX(0.94);transform-origin:left top;">Priority:</div>
<div class="t" style="left:1022px;top:682.34px;font-size:12px;font-weight:700;color:#3a3a3a;transform:scaleX(0.94);transform-origin:left top;">Batch:</div>
<div class="t" style="left:1022px;top:702.44px;font-size:12px;font-weight:700;color:#3a3a3a;transform:scaleX(0.94);transform-origin:left top;">Assembly:</div>
<div class="t" style="left:1022px;top:722.64px;font-size:12px;font-weight:700;color:#3a3a3a;transform:scaleX(0.94);transform-origin:left top;">Activated:</div>
<div class="t" style="left:1083px;top:682.34px;font-size:12px;font-weight:400;color:#3a3a3a;transform:scaleX(0.95);transform-origin:left top;">WO-RBA-HANGAR</div>
<div class="t" style="left:1083px;top:702.44px;font-size:12px;font-weight:400;color:#3a3a3a;transform:scaleX(0.95);transform-origin:left top;">100167370 - B</div>
<div class="t" style="left:1083px;top:722.64px;font-size:12px;font-weight:400;color:#3a3a3a;transform:scaleX(0.95);transform-origin:left top;">1/6/2021 2:52:30 PM</div>
<div class="a" style="left:1083px;top:655.8px;width:162px;height:19.5px;background:#fff;border:1px solid #7a7a7a"></div>
<div class="t" style="right:371px;top:660.14px;font-size:12px;font-weight:400;color:#3a3a3a;transform:scaleX(0.95);transform-origin:right top;">NORMAL</div>
<div class="a" style="left:1207px;top:658.8px;width:14px;height:14px;background:#008000"></div>
<div class="a" style="left:1228px;top:658.0999999999999px;width:15px;height:15.5px;background:linear-gradient(#f4f4f4,#e2e2e2);border:1px solid #a8a8a8"></div>
<svg style="left:1231.0px;top:662.3499999999999px;" width="9" height="8" viewBox="0 0 9 8"><path d="M1,1.5 L4.5,5 L8,1.5" fill="none" stroke="#555" stroke-width="1.3"/></svg>
<div class="a" style="left:1262px;top:655.8px;width:1px;height:80px;background:#a3aab5"></div>
<div class="t" style="left:1272.7px;top:658.64px;font-size:12px;font-weight:700;color:#3a3a3a;transform:scaleX(0.94);transform-origin:left top;">Rank:</div>
<div class="t" style="left:1334.6px;top:658.64px;font-size:12px;font-weight:700;color:#3a3a3a;">1</div>
<div class="t" style="left:1272.7px;top:678.84px;font-size:12px;font-weight:700;color:#3a3a3a;transform:scaleX(0.94);transform-origin:left top;">Order:</div>
<div class="t" style="left:1272.7px;top:698.64px;font-size:12px;font-weight:700;color:#3a3a3a;transform:scaleX(0.94);transform-origin:left top;">Qty:</div>
<div class="t" style="left:1334.6px;top:698.64px;font-size:12px;font-weight:400;color:#3a3a3a;">4</div>
<div class="t" style="left:1272.7px;top:718.44px;font-size:12px;font-weight:700;color:#3a3a3a;transform:scaleX(0.94);transform-origin:left top;">Customer:</div>
<div class="t" style="left:1000.6px;top:618.57px;font-size:20px;font-weight:400;color:#2a2a2a;transform:scaleX(0.9);transform-origin:left top;-webkit-text-stroke:0.45px #c0ced6;">3-Hangar</div>
<div class="t" style="right:348.5px;top:618.57px;font-size:20px;font-weight:400;color:#2a2a2a;transform:scaleX(0.9);transform-origin:right top;-webkit-text-stroke:0.45px #c0ced6;">Build Area</div>
<svg style="left:1238.5px;top:619px;" width="16" height="16" viewBox="0 0 16 16"><path d="M2,2 L14,14 M14,2 L2,14" stroke="#111" stroke-width="3.8"/></svg>
<div class="a" style="left:1524px;top:603px;width:17px;height:329px;background:#f0f0f0;border-left:1px solid #fff"></div>
<div class="a" style="left:1525px;top:620px;width:16px;height:9px;background:#bfbfbf"></div>
<svg style="left:1528.5px;top:606px;" width="9" height="9" viewBox="0 0 9 9"><path d="M1,5 L4.5,1.5 L8,5" fill="none" stroke="#606060" stroke-width="1.7"/></svg>
<svg style="left:1528.5px;top:918px;" width="9" height="9" viewBox="0 0 9 9"><path d="M1,1.5 L4.5,5 L8,1.5" fill="none" stroke="#606060" stroke-width="1.7"/></svg>
<div class="a" style="left:1004.5px;top:452.5px;width:170.5px;height:205px;background:#fff;border:1px solid #a0a0a0;box-shadow:1.5px 1.5px 2px rgba(0,0,0,0.18)"></div>
<div class="a" style="left:1013px;top:457.5px;width:15.5px;height:15px;background:#000;border:1px solid #808080"></div>
<div class="t" style="left:1037.2px;top:459.84px;font-size:12px;font-weight:400;color:#333;">Automatic</div>
<div class="a" style="left:1006px;top:477px;width:168px;height:24px;background:#efefef"></div>
<div class="t" style="left:1011.5px;top:483.84px;font-size:12px;font-weight:700;color:#5f5f5f;transform:scaleX(0.95);transform-origin:left top;">Theme Colors</div>
<div class="a" style="left:1007.0px;top:504px;width:13px;height:13px;background:#ffffff;border:1px solid #c4c4c4"></div>
<div class="a" style="left:1007.0px;top:523px;width:13px;height:64.5px;border:1px solid #c4c4c4;background:#fff"></div>
<div class="a" style="left:1008.0px;top:524.0px;width:11px;height:12.7px;background:#f2f2f2"></div>
<div class="a" style="left:1008.0px;top:536.7px;width:11px;height:12.7px;background:#d8d8d8"></div>
<div class="a" style="left:1008.0px;top:549.4px;width:11px;height:12.7px;background:#bfbfbf"></div>
<div class="a" style="left:1008.0px;top:562.1px;width:11px;height:12.7px;background:#a5a5a5"></div>
<div class="a" style="left:1008.0px;top:574.8px;width:11px;height:12.7px;background:#7f7f7f"></div>
<div class="a" style="left:1007.0px;top:618.5px;width:13px;height:12px;background:#800000;border:1px solid #c4c4c4"></div>
<div class="a" style="left:1024.02px;top:504px;width:13px;height:13px;background:#000000;border:1px solid #c4c4c4"></div>
<div class="a" style="left:1024.02px;top:523px;width:13px;height:64.5px;border:1px solid #c4c4c4;background:#fff"></div>
<div class="a" style="left:1025.02px;top:524.0px;width:11px;height:12.7px;background:#7f7f7f"></div>
<div class="a" style="left:1025.02px;top:536.7px;width:11px;height:12.7px;background:#595959"></div>
<div class="a" style="left:1025.02px;top:549.4px;width:11px;height:12.7px;background:#3f3f3f"></div>
<div class="a" style="left:1025.02px;top:562.1px;width:11px;height:12.7px;background:#262626"></div>
<div class="a" style="left:1025.02px;top:574.8px;width:11px;height:12.7px;background:#0c0c0c"></div>
<div class="a" style="left:1024.02px;top:618.5px;width:13px;height:12px;background:#ff0000;border:1px solid #c4c4c4"></div>
<div class="a" style="left:1041.04px;top:504px;width:13px;height:13px;background:#eeece1;border:1px solid #c4c4c4"></div>
<div class="a" style="left:1041.04px;top:523px;width:13px;height:64.5px;border:1px solid #c4c4c4;background:#fff"></div>
<div class="a" style="left:1042.04px;top:524.0px;width:11px;height:12.7px;background:#e3e1d6"></div>
<div class="a" style="left:1042.04px;top:536.7px;width:11px;height:12.7px;background:#d6d3c6"></div>
<div class="a" style="left:1042.04px;top:549.4px;width:11px;height:12.7px;background:#c0bdb0"></div>
<div class="a" style="left:1042.04px;top:562.1px;width:11px;height:12.7px;background:#a6a396"></div>
<div class="a" style="left:1042.04px;top:574.8px;width:11px;height:12.7px;background:#7a776b"></div>
<div class="a" style="left:1041.04px;top:618.5px;width:13px;height:12px;background:#ffa500;border:1px solid #c4c4c4"></div>
<div class="a" style="left:1058.06px;top:504px;width:13px;height:13px;background:#1f497d;border:1px solid #c4c4c4"></div>
<div class="a" style="left:1058.06px;top:523px;width:13px;height:64.5px;border:1px solid #c4c4c4;background:#fff"></div>
<div class="a" style="left:1059.06px;top:524.0px;width:11px;height:12.7px;background:#6993c9"></div>
<div class="a" style="left:1059.06px;top:536.7px;width:11px;height:12.7px;background:#5079b4"></div>
<div class="a" style="left:1059.06px;top:549.4px;width:11px;height:12.7px;background:#44699c"></div>
<div class="a" style="left:1059.06px;top:562.1px;width:11px;height:12.7px;background:#0d3369"></div>
<div class="a" style="left:1059.06px;top:574.8px;width:11px;height:12.7px;background:#011b55"></div>
<div class="a" style="left:1058.06px;top:618.5px;width:13px;height:12px;background:#ffff00;border:1px solid #c4c4c4"></div>
<div class="a" style="left:1075.08px;top:504px;width:13px;height:13px;background:#4f81bd;border:1px solid #c4c4c4"></div>
<div class="a" style="left:1075.08px;top:523px;width:13px;height:64.5px;border:1px solid #c4c4c4;background:#fff"></div>
<div class="a" style="left:1076.08px;top:524.0px;width:11px;height:12.7px;background:#99c9ff"></div>
<div class="a" style="left:1076.08px;top:536.7px;width:11px;height:12.7px;background:#84b2ed"></div>
<div class="a" style="left:1076.08px;top:549.4px;width:11px;height:12.7px;background:#74a2dc"></div>
<div class="a" style="left:1076.08px;top:562.1px;width:11px;height:12.7px;background:#3c6da9"></div>
<div class="a" style="left:1076.08px;top:574.8px;width:11px;height:12.7px;background:#245393"></div>
<div class="a" style="left:1075.08px;top:618.5px;width:13px;height:12px;background:#90ee90;border:1px solid #c4c4c4"></div>
<div class="a" style="left:1092.1px;top:504px;width:13px;height:13px;background:#c0504d;border:1px solid #c4c4c4"></div>
<div class="a" style="left:1092.1px;top:523px;width:13px;height:64.5px;border:1px solid #c4c4c4;background:#fff"></div>
<div class="a" style="left:1093.1px;top:524.0px;width:11px;height:12.7px;background:#fb9a9a"></div>
<div class="a" style="left:1093.1px;top:536.7px;width:11px;height:12.7px;background:#f18383"></div>
<div class="a" style="left:1093.1px;top:549.4px;width:11px;height:12.7px;background:#e37272"></div>
<div class="a" style="left:1093.1px;top:562.1px;width:11px;height:12.7px;background:#a93b3b"></div>
<div class="a" style="left:1093.1px;top:574.8px;width:11px;height:12.7px;background:#8e2222"></div>
<div class="a" style="left:1092.1px;top:618.5px;width:13px;height:12px;background:#008000;border:1px solid #c4c4c4"></div>
<div class="a" style="left:1109.12px;top:504px;width:13px;height:13px;background:#9bbb59;border:1px solid #c4c4c4"></div>
<div class="a" style="left:1109.12px;top:523px;width:13px;height:64.5px;border:1px solid #c4c4c4;background:#fff"></div>
<div class="a" style="left:1110.12px;top:524.0px;width:11px;height:12.7px;background:#95b354"></div>
<div class="a" style="left:1110.12px;top:536.7px;width:11px;height:12.7px;background:#86a445"></div>
<div class="a" style="left:1110.12px;top:549.4px;width:11px;height:12.7px;background:#6e8c2d"></div>
<div class="a" style="left:1110.12px;top:562.1px;width:11px;height:12.7px;background:#566f1a"></div>
<div class="a" style="left:1110.12px;top:574.8px;width:11px;height:12.7px;background:#2a4609"></div>
<div class="a" style="left:1109.12px;top:618.5px;width:13px;height:12px;background:#add8e6;border:1px solid #c4c4c4"></div>
<div class="a" style="left:1126.14px;top:504px;width:13px;height:13px;background:#8064a2;border:1px solid #c4c4c4"></div>
<div class="a" style="left:1126.14px;top:523px;width:13px;height:64.5px;border:1px solid #c4c4c4;background:#fff"></div>
<div class="a" style="left:1127.14px;top:524.0px;width:11px;height:12.7px;background:#c9aceb"></div>
<div class="a" style="left:1127.14px;top:536.7px;width:11px;height:12.7px;background:#b495d5"></div>
<div class="a" style="left:1127.14px;top:549.4px;width:11px;height:12.7px;background:#a486c3"></div>
<div class="a" style="left:1127.14px;top:562.1px;width:11px;height:12.7px;background:#6a4f8b"></div>
<div class="a" style="left:1127.14px;top:574.8px;width:11px;height:12.7px;background:#4f3670"></div>
<div class="a" style="left:1126.14px;top:618.5px;width:13px;height:12px;background:#0000ff;border:1px solid #c4c4c4"></div>
<div class="a" style="left:1143.16px;top:504px;width:13px;height:13px;background:#4bacc6;border:1px solid #c4c4c4"></div>
<div class="a" style="left:1143.16px;top:523px;width:13px;height:64.5px;border:1px solid #c4c4c4;background:#fff"></div>
<div class="a" style="left:1144.16px;top:524.0px;width:11px;height:12.7px;background:#3ea4bf"></div>
<div class="a" style="left:1144.16px;top:536.7px;width:11px;height:12.7px;background:#3495ae"></div>
<div class="a" style="left:1144.16px;top:549.4px;width:11px;height:12.7px;background:#227f98"></div>
<div class="a" style="left:1144.16px;top:562.1px;width:11px;height:12.7px;background:#0b6a82"></div>
<div class="a" style="left:1144.16px;top:574.8px;width:11px;height:12.7px;background:#053f58"></div>
<div class="a" style="left:1143.16px;top:618.5px;width:13px;height:12px;background:#00008b;border:1px solid #c4c4c4"></div>
<div class="a" style="left:1160.18px;top:504px;width:13px;height:13px;background:#f79646;border:1px solid #c4c4c4"></div>
<div class="a" style="left:1160.18px;top:523px;width:13px;height:64.5px;border:1px solid #c4c4c4;background:#fff"></div>
<div class="a" style="left:1161.18px;top:524.0px;width:11px;height:12.7px;background:#ef8a3d"></div>
<div class="a" style="left:1161.18px;top:536.7px;width:11px;height:12.7px;background:#e2802f"></div>
<div class="a" style="left:1161.18px;top:549.4px;width:11px;height:12.7px;background:#c9621a"></div>
<div class="a" style="left:1161.18px;top:562.1px;width:11px;height:12.7px;background:#b1510a"></div>
<div class="a" style="left:1161.18px;top:574.8px;width:11px;height:12.7px;background:#8a2d02"></div>
<div class="a" style="left:1160.18px;top:618.5px;width:13px;height:12px;background:#800080;border:1px solid #c4c4c4"></div>
<div class="a" style="left:1161.18px;top:536.7px;width:11px;height:12.7px;background:#fff"></div>
<div class="a" style="left:1162.18px;top:537.7px;width:9px;height:10.7px;background:#e2802f"></div>
<div class="a" style="left:1006px;top:591px;width:168px;height:24px;background:#efefef"></div>
<div class="t" style="left:1011.5px;top:597.34px;font-size:12px;font-weight:700;color:#5f5f5f;transform:scaleX(0.95);transform-origin:left top;">Standard Colors</div>
<div class="a" style="left:1006px;top:633px;width:168px;height:1px;background:#d8d8d8"></div>
<svg style="left:1012.5px;top:638.5px;" width="16" height="14" viewBox="0 0 16 14"><path d="M8,0.8 C12.5,0.8 15.5,3.5 15.5,6.5 C15.5,9 13,9 11.5,9 C10,9 10.5,11 10.5,12 C10.5,13 9,13.5 7.5,13.5 C3.5,13.5 0.5,10.5 0.5,7 C0.5,3.5 3.5,0.8 8,0.8 Z" fill="#f5d9a8" stroke="#c98e3d" stroke-width="0.9"/><circle cx="5" cy="4.5" r="1.6" fill="#e33"/><circle cx="9.5" cy="3.5" r="1.5" fill="#e33"/><circle cx="12.5" cy="6" r="1.4" fill="#4a4"/><circle cx="4" cy="8.5" r="1.5" fill="#37c"/><circle cx="6.5" cy="11" r="1.3" fill="#37c"/></svg>
<div class="t" style="left:1037.9px;top:640.34px;font-size:12px;font-weight:400;color:#333;transform:scaleX(0.95);transform-origin:left top;">More Colors...</div></body></html>
